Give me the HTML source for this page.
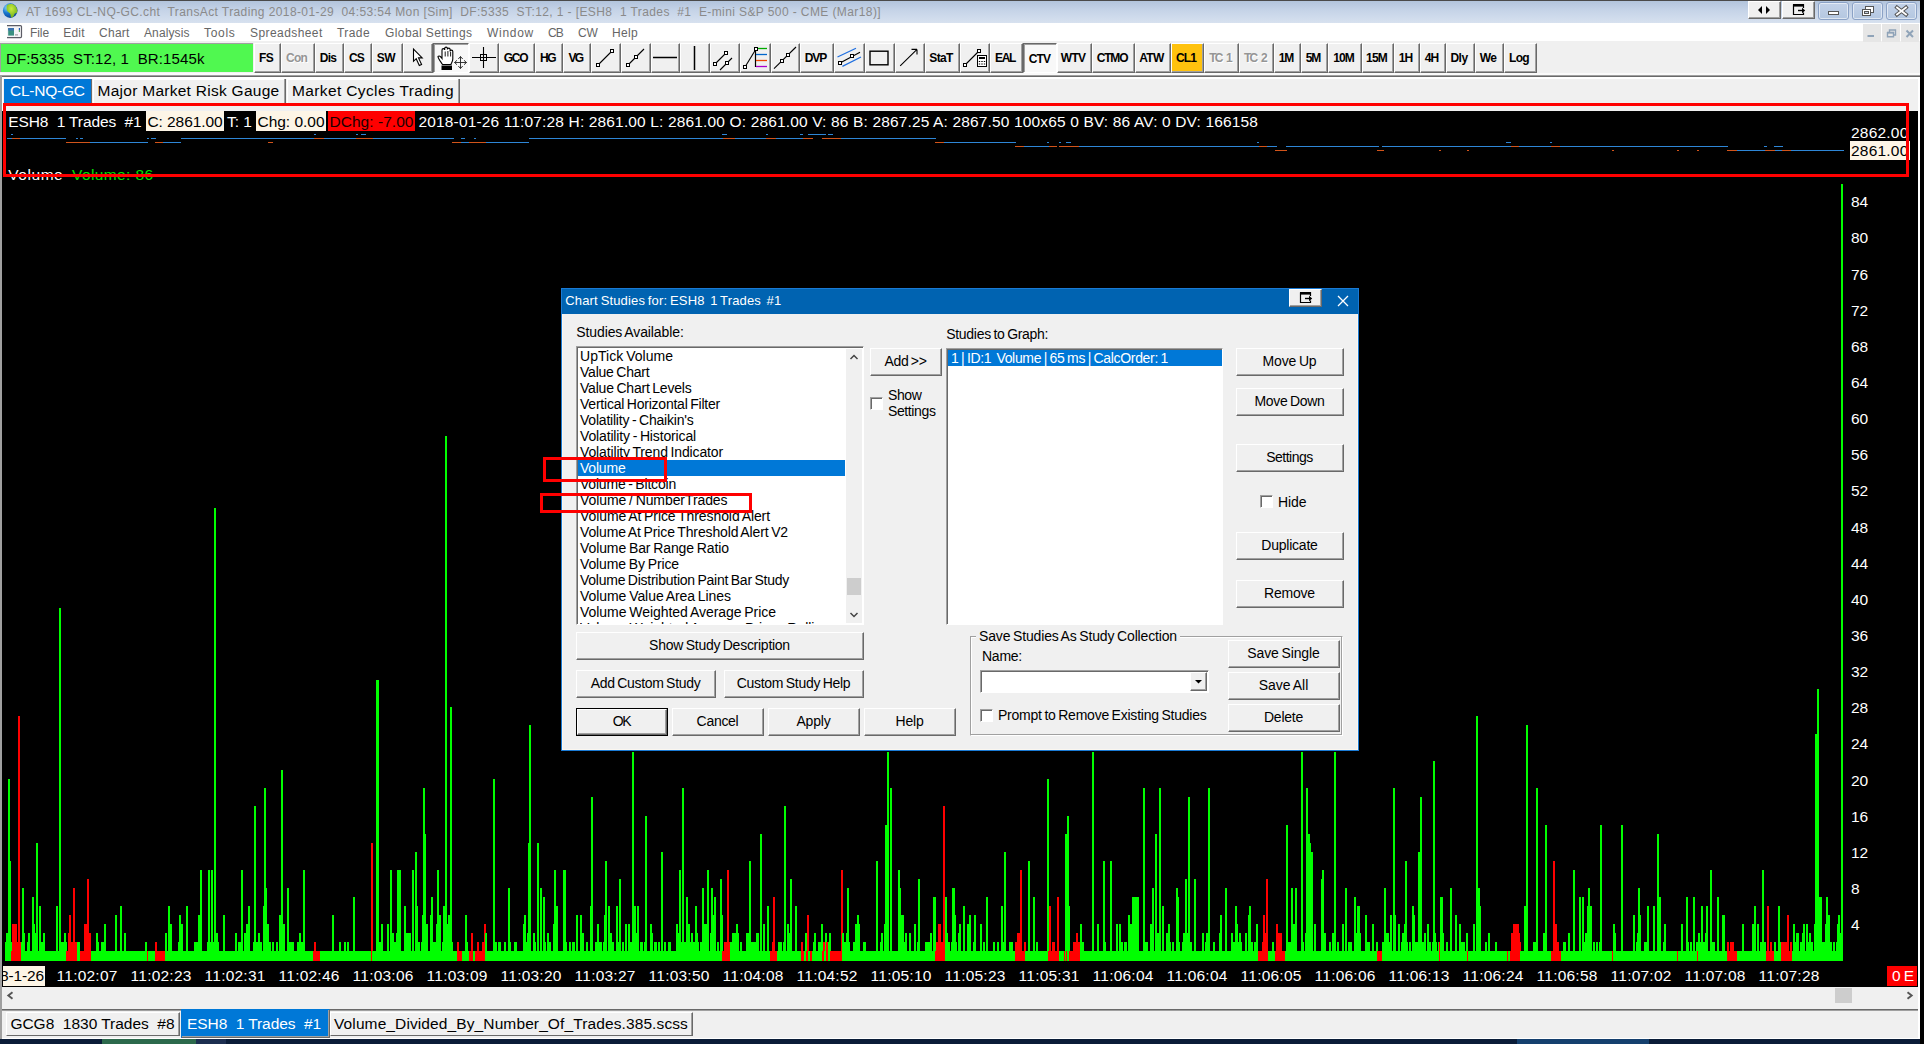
<!DOCTYPE html>
<html lang="en"><head><meta charset="utf-8"><title>Chart Studies</title>
<style>
html,body{margin:0;padding:0}
body{width:1924px;height:1044px;overflow:hidden;background:#000;position:relative;font-family:"Liberation Sans",sans-serif}
div,span,svg{position:absolute}
span{white-space:pre}
span>i{font-style:normal;position:static}
</style></head>
<body>
<div style="left:0px;top:1039px;width:1924px;height:5px;background:#0a1c38"></div>
<div style="left:102px;top:1039px;width:94px;height:5px;background:#2c694c"></div>
<div style="left:196px;top:1039px;width:30px;height:5px;background:#1c2e50"></div>
<div style="left:1517px;top:1039px;width:132px;height:5px;background:#15406e"></div>
<div style="left:1920px;top:0px;width:4px;height:1044px;background:#000"></div>
<div style="left:0px;top:0px;width:1920px;height:1039px;background:#f0f0f0"></div>
<div style="left:0px;top:0px;width:1920px;height:23px;background:linear-gradient(#b2c4dc,#c6d4e8 45%,#d7e1ef);border-top:1px solid #4a4a4a;box-sizing:border-box"></div>
<svg style="left:2px;top:2px" width="18" height="18" viewBox="0 0 18 18"><defs><radialGradient id="gl" cx="30%" cy="30%" r="80%"><stop offset="0" stop-color="#8fd8ff"/><stop offset=".45" stop-color="#1878d0"/><stop offset="1" stop-color="#0a3c90"/></radialGradient><radialGradient id="gg" cx="45%" cy="35%" r="70%"><stop offset="0" stop-color="#c8ec40"/><stop offset="1" stop-color="#6cac18"/></radialGradient></defs><circle cx="8.200" cy="8.600" r="7.300" fill="url(#gl)"/><path d="M5 3.200c2.500-1.800 6.500-1.800 8.500.8 1.600 2.200 2.200 4.500 1.600 6.500-1 .8-2.200.4-2.700 1.800-.5 1.600-1.500 3-3 3.400-1-1-.4-3-1.500-4.400-1.500-1-2.600-1.800-3.100-3.300-.4-1.700-.4-3.400.2-4.800z" fill="url(#gg)"/></svg>
<span id="t1" style="top:3.64px;font-size:12px;line-height:16px;color:#8a8a8a;letter-spacing:0.402px;left:26px;">AT 1693 CL-NQ-GC.cht  TransAct Trading 2018-01-29  04:53:54 Mon [Sim]  DF:5335  ST:12, 1 - [ESH8  1 Trades  #1  E-mini S&amp;P 500 - CME (Mar18)]</span>
<div style="left:1748px;top:1px;width:33px;height:18px;background:#f0f0f0;border:1px solid;border-color:#fff #696969 #696969 #fff;box-shadow:inset -1px -1px 0 #a0a0a0;box-sizing:border-box"><svg width="30" height="16" viewBox="0 0 30 16"><path d="M13 4v8l-4-4zM17 4v8l4-4z" fill="#000"/></svg></div>
<div style="left:1782px;top:1px;width:33px;height:18px;background:#f0f0f0;border:1px solid;border-color:#fff #696969 #696969 #fff;box-shadow:inset -1px -1px 0 #a0a0a0;box-sizing:border-box"><svg width="30" height="16" viewBox="0 0 30 16"><path d="M10.500 2.500h10v3.500M20.500 10.500v2h-10v-10" fill="none" stroke="#000" stroke-width="1.200"/><path d="M10 2h11v2.600h-11z" fill="#000"/><path d="M15 8.500h5" stroke="#000" stroke-width="1.400"/><path d="M19 5.800l3.200 2.700-3.200 2.700z" fill="#000"/></svg></div>
<div style="left:1818px;top:2px;width:31px;height:18px;background:linear-gradient(#c3d2e8,#b4c7e0);border:1px solid #8ba2c6;border-radius:3px;box-shadow:inset 0 0 0 1px rgba(255,255,255,.55);box-sizing:border-box"><svg width="29" height="16" viewBox="0 0 29 16"><rect x="9.5" y="8.500" width="10" height="3" fill="#fff" stroke="#555"/></svg></div>
<div style="left:1852px;top:2px;width:31px;height:18px;background:linear-gradient(#c3d2e8,#b4c7e0);border:1px solid #8ba2c6;border-radius:3px;box-shadow:inset 0 0 0 1px rgba(255,255,255,.55);box-sizing:border-box"><svg width="29" height="16" viewBox="0 0 29 16"><rect x="12.5" y="3.500" width="8" height="6" fill="#fff" stroke="#555"/><rect x="9.500" y="6.500" width="8" height="6" fill="#fff" stroke="#555"/><rect x="11.5" y="8.500" width="4" height="2" fill="#c8d4e6" stroke="#555"/></svg></div>
<div style="left:1886px;top:2px;width:31px;height:18px;background:linear-gradient(#c3d2e8,#b4c7e0);border:1px solid #8ba2c6;border-radius:3px;box-shadow:inset 0 0 0 1px rgba(255,255,255,.55);box-sizing:border-box"><svg width="29" height="16" viewBox="0 0 29 16"><path d="M10 4.500l9 7M19 4.500l-9 7" stroke="#555" stroke-width="3.800" stroke-linecap="square"/><path d="M10 4.500l9 7M19 4.500l-9 7" stroke="#fff" stroke-width="1.800" stroke-linecap="square"/></svg></div>
<div style="left:0px;top:23px;width:1920px;height:18px;background:#fff"></div>
<svg style="left:7px;top:25px" width="16" height="14" viewBox="0 0 16 14"><path d="M0 .600h13.500q1 0 1 1v10q0 1-1 1h-13.500" fill="#f4f4f6" stroke="#5c5c66" stroke-width="1.200"/><rect x="1.200" y="3" width="5.800" height="7.600" fill="#3a9080"/><rect x="1.200" y="3" width="5.800" height="2.500" fill="#3a70b0"/><rect x="11.800" y="3" width="1.200" height="2.200" fill="#2458b0"/><rect x="11.800" y="5.200" width="1.200" height="1.600" fill="#40a040"/><rect x="8" y="9.100" width="3" height="1.500" fill="#b0b0b0"/></svg>
<span id="t2" style="top:25.04px;font-size:12px;line-height:16px;color:#666;letter-spacing:-0.086px;left:30px;">File</span>
<span id="t3" style="top:25.04px;font-size:12px;line-height:16px;color:#666;letter-spacing:0.228px;left:63.2px;">Edit</span>
<span id="t4" style="top:25.04px;font-size:12px;line-height:16px;color:#666;letter-spacing:0.271px;left:99px;">Chart</span>
<span id="t5" style="top:25.04px;font-size:12px;line-height:16px;color:#666;letter-spacing:0.114px;left:144px;">Analysis</span>
<span id="t6" style="top:25.04px;font-size:12px;line-height:16px;color:#666;letter-spacing:0.697px;left:204px;">Tools</span>
<span id="t7" style="top:25.04px;font-size:12px;line-height:16px;color:#666;letter-spacing:0.422px;left:250px;">Spreadsheet</span>
<span id="t8" style="top:25.04px;font-size:12px;line-height:16px;color:#666;letter-spacing:0.419px;left:337px;">Trade</span>
<span id="t9" style="top:25.04px;font-size:12px;line-height:16px;color:#666;letter-spacing:0.401px;left:385px;">Global Settings</span>
<span id="t10" style="top:25.04px;font-size:12px;line-height:16px;color:#666;letter-spacing:0.719px;left:487px;">Window</span>
<span id="t11" style="top:25.04px;font-size:12px;line-height:16px;color:#666;letter-spacing:-0.836px;left:548px;">CB</span>
<span id="t12" style="top:25.04px;font-size:12px;line-height:16px;color:#666;letter-spacing:-0.100px;left:578px;">CW</span>
<span id="t13" style="top:25.04px;font-size:12px;line-height:16px;color:#666;letter-spacing:0.328px;left:612px;">Help</span>
<div style="left:1863px;top:24px;width:18px;height:18px;background:#e6e6e6"></div>
<div style="left:1882px;top:24px;width:18px;height:18px;background:#e6e6e6"></div>
<div style="left:1901px;top:24px;width:18px;height:18px;background:#e6e6e6"></div>
<svg style="left:1863px;top:24px" width="56" height="19" viewBox="0 0 56 19"><path d="M4.500 12h6.500" stroke="#8fa3b8" stroke-width="2"/><path d="M26.500 8v-2h6v5h-2" fill="none" stroke="#8fa3b8" stroke-width="1.400"/><path d="M24.500 8.800h6v4h-6z" fill="none" stroke="#8fa3b8" stroke-width="1.400"/><path d="M24 8.500h7" stroke="#8fa3b8" stroke-width="1.600"/><path d="M43.500 6.500l6.500 6.500M50 6.500l-6.500 6.500" stroke="#8fa3b8" stroke-width="2"/></svg>
<div style="left:0px;top:43px;width:1920px;height:30px;background:#f0f0f0"></div>
<div style="left:0px;top:73px;width:1920px;height:2px;background:#fafafa"></div>
<div style="left:0px;top:75px;width:1920px;height:1px;background:#a0a0a0"></div>
<div style="left:0px;top:76px;width:1920px;height:1px;background:#696969"></div>
<div style="left:0px;top:43px;width:253px;height:29px;background:#a0a0a0"></div>
<div style="left:1px;top:44px;width:252px;height:28px;background:#50f850"></div>
<span id="t14" style="top:48.60px;font-size:15px;line-height:20px;color:#000;letter-spacing:0.129px;left:6px;">DF:5335  ST:12, 1  BR:1545k</span>
<div style="left:254px;top:43px;width:27px;height:30px;background:#f0f0f0;border:1px solid;border-color:#fff #696969 #696969 #fff;box-shadow:inset -1px -1px 0 #a0a0a0;box-sizing:border-box"></div>
<span style="top:49.54px;font-size:12px;line-height:16px;color:#000;font-weight:bold;letter-spacing:-0.672px;left:66.0px;width:400px;text-align:center;"><i id="t15">FS</i></span>
<div style="left:281px;top:43px;width:34px;height:30px;background:#f0f0f0;border:1px solid;border-color:#fff #696969 #696969 #fff;box-shadow:inset -1px -1px 0 #a0a0a0;box-sizing:border-box"></div>
<span style="top:49.54px;font-size:12px;line-height:16px;color:#959595;font-weight:bold;letter-spacing:-0.776px;left:96.5px;width:400px;text-align:center;text-shadow:1px 1px 0 #fff;"><i id="t16">Con</i></span>
<div style="left:315px;top:43px;width:29px;height:30px;background:#f0f0f0;border:1px solid;border-color:#fff #696969 #696969 #fff;box-shadow:inset -1px -1px 0 #a0a0a0;box-sizing:border-box"></div>
<span style="top:49.54px;font-size:12px;line-height:16px;color:#000;font-weight:bold;letter-spacing:-0.696px;left:128.0px;width:400px;text-align:center;"><i id="t17">Dis</i></span>
<div style="left:344px;top:43px;width:28px;height:30px;background:#f0f0f0;border:1px solid;border-color:#fff #696969 #696969 #fff;box-shadow:inset -1px -1px 0 #a0a0a0;box-sizing:border-box"></div>
<span style="top:49.54px;font-size:12px;line-height:16px;color:#000;font-weight:bold;letter-spacing:-0.836px;left:156.5px;width:400px;text-align:center;"><i id="t18">CS</i></span>
<div style="left:372px;top:43px;width:31px;height:30px;background:#f0f0f0;border:1px solid;border-color:#fff #696969 #696969 #fff;box-shadow:inset -1px -1px 0 #a0a0a0;box-sizing:border-box"></div>
<span style="top:49.54px;font-size:12px;line-height:16px;color:#000;font-weight:bold;letter-spacing:-0.522px;left:186.0px;width:400px;text-align:center;"><i id="t19">SW</i></span>
<div style="left:403px;top:43px;width:30px;height:30px;background:#f0f0f0;border:1px solid;border-color:#fff #696969 #696969 #fff;box-shadow:inset -1px -1px 0 #a0a0a0;box-sizing:border-box"><svg style="left:-1px;top:-1px" width="36" height="30" viewBox="0 0 36 30"><path d="M10.500 6v12.300l2.700-2.600 3.100 6.900 2.300-1.100-3.100-6.600h3.700z" fill="#fff" stroke="#000" stroke-width="1.100"/></svg></div>
<div style="left:433px;top:43px;width:36px;height:30px;background:#f8f8f8;border:1px solid;border-color:#696969 #fff #fff #696969;box-shadow:inset 1px 1px 0 #a0a0a0;box-sizing:border-box"><svg style="left:0px;top:0px" width="36" height="30" viewBox="0 0 36 30"><path d="M8.500 20.500c-1.500-2.500-4.500-6-4.500-8 1.200-1.200 2.500 0 4 2v-8.500c0-1.800 2.700-1.800 2.700 0v-1.500c0-1.800 2.700-1.800 2.700 0v1c0-1.800 2.700-1.800 2.700 0v2c0-1.800 2.700-1.800 2.700 0v7.500c0 2.500-1.200 3.500-1.800 5.500z" fill="#fff" stroke="#000" stroke-width="1.100"/><path d="M11.200 7.500v5M13.900 7v5.500M16.600 8v4.500" stroke="#000" stroke-width=".9"/><rect x="7.500" y="21.500" width="10.500" height="4.500" fill="#000"/><path transform="translate(1,-1.500)" d="M25.500 14v12M19.500 20h12M25.500 14l-2.200 2.500M25.500 14l2.200 2.500M25.500 26l-2.200-2.500M25.500 26l2.200-2.500M19.500 20l2.500-2.200M19.500 20l2.500 2.200M31.500 20l-2.500-2.200M31.500 20l-2.500 2.200" stroke="#222" stroke-width=".9" fill="none"/></svg></div>
<div style="left:469px;top:43px;width:30px;height:30px;background:#f0f0f0;border:1px solid;border-color:#fff #696969 #696969 #fff;box-shadow:inset -1px -1px 0 #a0a0a0;box-sizing:border-box"><svg style="left:-1px;top:-1px" width="36" height="30" viewBox="0 0 36 30"><path d="M3 14.500h24M14.500 4v21" stroke="#000" stroke-width="1.100"/><rect x="11.500" y="11.500" width="6" height="6" fill="none" stroke="#000"/></svg></div>
<div style="left:499px;top:43px;width:36px;height:30px;background:#f0f0f0;border:1px solid;border-color:#fff #696969 #696969 #fff;box-shadow:inset -1px -1px 0 #a0a0a0;box-sizing:border-box"></div>
<span style="top:49.54px;font-size:12px;line-height:16px;color:#000;font-weight:bold;letter-spacing:-1.348px;left:315.5px;width:400px;text-align:center;"><i id="t20">GCO</i></span>
<div style="left:535px;top:43px;width:28px;height:30px;background:#f0f0f0;border:1px solid;border-color:#fff #696969 #696969 #fff;box-shadow:inset -1px -1px 0 #a0a0a0;box-sizing:border-box"></div>
<span style="top:49.54px;font-size:12px;line-height:16px;color:#000;font-weight:bold;letter-spacing:-1.500px;left:347.5px;width:400px;text-align:center;"><i id="t21">HG</i></span>
<div style="left:563px;top:43px;width:28px;height:30px;background:#f0f0f0;border:1px solid;border-color:#fff #696969 #696969 #fff;box-shadow:inset -1px -1px 0 #a0a0a0;box-sizing:border-box"></div>
<span style="top:49.54px;font-size:12px;line-height:16px;color:#000;font-weight:bold;letter-spacing:-1.672px;left:375.5px;width:400px;text-align:center;"><i id="t22">VG</i></span>
<div style="left:591px;top:43px;width:30px;height:30px;background:#f0f0f0;border:1px solid;border-color:#fff #696969 #696969 #fff;box-shadow:inset -1px -1px 0 #a0a0a0;box-sizing:border-box"><svg style="left:-1px;top:-1px" width="36" height="30" viewBox="0 0 36 30"><path d="M7 22L21 8" stroke="#000" stroke-width="1.100"/><rect x="5.5" y="20.5" width="3" height="3" fill="#fff" stroke="#000" stroke-width="1"/><rect x="19.5" y="6.5" width="3" height="3" fill="#fff" stroke="#000" stroke-width="1"/></svg></div>
<div style="left:621px;top:43px;width:30px;height:30px;background:#f0f0f0;border:1px solid;border-color:#fff #696969 #696969 #fff;box-shadow:inset -1px -1px 0 #a0a0a0;box-sizing:border-box"><svg style="left:-1px;top:-1px" width="36" height="30" viewBox="0 0 36 30"><path d="M7 22L23 6" stroke="#000" stroke-width="1.100"/><rect x="5.5" y="20.5" width="3" height="3" fill="#fff" stroke="#000" stroke-width="1"/><rect x="13.5" y="12.5" width="3" height="3" fill="#fff" stroke="#000" stroke-width="1"/></svg></div>
<div style="left:651px;top:43px;width:29px;height:30px;background:#f0f0f0;border:1px solid;border-color:#fff #696969 #696969 #fff;box-shadow:inset -1px -1px 0 #a0a0a0;box-sizing:border-box"><svg style="left:-1px;top:-1px" width="36" height="30" viewBox="0 0 36 30"><path d="M2 14.500h24" stroke="#000" stroke-width="1.500"/></svg></div>
<div style="left:680px;top:43px;width:30px;height:30px;background:#f0f0f0;border:1px solid;border-color:#fff #696969 #696969 #fff;box-shadow:inset -1px -1px 0 #a0a0a0;box-sizing:border-box"><svg style="left:-1px;top:-1px" width="36" height="30" viewBox="0 0 36 30"><path d="M14.500 3v24" stroke="#000" stroke-width="1.500"/></svg></div>
<div style="left:710px;top:43px;width:30px;height:30px;background:#f0f0f0;border:1px solid;border-color:#fff #696969 #696969 #fff;box-shadow:inset -1px -1px 0 #a0a0a0;box-sizing:border-box"><svg style="left:-1px;top:-1px" width="36" height="30" viewBox="0 0 36 30"><path d="M5 21L16 10M10 27L22 15" stroke="#000" stroke-width="1.100"/><rect x="3.5" y="19.5" width="3" height="3" fill="#fff" stroke="#000" stroke-width="1"/><rect x="14.5" y="8.5" width="3" height="3" fill="#fff" stroke="#000" stroke-width="1"/><rect x="15.5" y="18.5" width="3" height="3" fill="#fff" stroke="#000" stroke-width="1"/></svg></div>
<div style="left:740px;top:43px;width:31px;height:30px;background:#f0f0f0;border:1px solid;border-color:#fff #696969 #696969 #fff;box-shadow:inset -1px -1px 0 #a0a0a0;box-sizing:border-box"><svg style="left:-1px;top:-1px" width="36" height="30" viewBox="0 0 36 30"><path d="M5 24L16 6" stroke="#000" stroke-width="1.100"/><path d="M15.500 6v18" stroke="#000" stroke-width="1.200"/><path d="M16 5.500h11" stroke="#0a0" stroke-width="1.300"/><path d="M16 11.500h11" stroke="#06c" stroke-width="1.300"/><path d="M16 17.500h11" stroke="#e40" stroke-width="1.300"/><path d="M16 23.500h11" stroke="#a0c" stroke-width="1.300"/><rect x="3.5" y="22.5" width="3" height="3" fill="#fff" stroke="#000" stroke-width="1"/><rect x="14.5" y="4.5" width="3" height="3" fill="#fff" stroke="#000" stroke-width="1"/></svg></div>
<div style="left:771px;top:43px;width:29px;height:30px;background:#f0f0f0;border:1px solid;border-color:#fff #696969 #696969 #fff;box-shadow:inset -1px -1px 0 #a0a0a0;box-sizing:border-box"><svg style="left:-1px;top:-1px" width="36" height="30" viewBox="0 0 36 30"><path d="M3 25.700L25 4" stroke="#000" stroke-width="1.100"/><rect x="9.5" y="16.5" width="3" height="3" fill="#fff" stroke="#000" stroke-width="1"/><rect x="15.5" y="10.5" width="3" height="3" fill="#fff" stroke="#000" stroke-width="1"/></svg></div>
<div style="left:800px;top:43px;width:34px;height:30px;background:#f0f0f0;border:1px solid;border-color:#fff #696969 #696969 #fff;box-shadow:inset -1px -1px 0 #a0a0a0;box-sizing:border-box"></div>
<span style="top:49.54px;font-size:12px;line-height:16px;color:#000;font-weight:bold;letter-spacing:-1.029px;left:615.5px;width:400px;text-align:center;"><i id="t23">DVP</i></span>
<div style="left:834px;top:43px;width:31px;height:30px;background:#f0f0f0;border:1px solid;border-color:#fff #696969 #696969 #fff;box-shadow:inset -1px -1px 0 #a0a0a0;box-sizing:border-box"><svg style="left:-1px;top:-1px" width="36" height="30" viewBox="0 0 36 30"><path d="M3.500 14L22 5.300M8.400 23.400L27 14" stroke="#1f6fe0" stroke-width="1.250"/><path d="M6 20L26 9.300" stroke="#000" stroke-width="1.100"/><rect x="4.5" y="18.5" width="3" height="3" fill="#fff" stroke="#000" stroke-width="1"/><rect x="16.5" y="11.5" width="3" height="3" fill="#fff" stroke="#000" stroke-width="1"/></svg></div>
<div style="left:865px;top:43px;width:30px;height:30px;background:#f0f0f0;border:1px solid;border-color:#fff #696969 #696969 #fff;box-shadow:inset -1px -1px 0 #a0a0a0;box-sizing:border-box"><svg style="left:-1px;top:-1px" width="36" height="30" viewBox="0 0 36 30"><rect x="5" y="8.200" width="18" height="13.600" fill="none" stroke="#000" stroke-width="1.400"/></svg></div>
<div style="left:895px;top:43px;width:30px;height:30px;background:#f0f0f0;border:1px solid;border-color:#fff #696969 #696969 #fff;box-shadow:inset -1px -1px 0 #a0a0a0;box-sizing:border-box"><svg style="left:-1px;top:-1px" width="36" height="30" viewBox="0 0 36 30"><path d="M5.200 22.800L22 6.400M22 6.400h-5.500M22 6.400v5" stroke="#000" stroke-width="1.100" fill="none"/></svg></div>
<div style="left:925px;top:43px;width:35px;height:30px;background:#f0f0f0;border:1px solid;border-color:#fff #696969 #696969 #fff;box-shadow:inset -1px -1px 0 #a0a0a0;box-sizing:border-box"></div>
<span style="top:49.54px;font-size:12px;line-height:16px;color:#000;font-weight:bold;letter-spacing:-0.679px;left:741.0px;width:400px;text-align:center;"><i id="t24">StaT</i></span>
<div style="left:960px;top:43px;width:30px;height:30px;background:#f0f0f0;border:1px solid;border-color:#fff #696969 #696969 #fff;box-shadow:inset -1px -1px 0 #a0a0a0;box-sizing:border-box"><svg style="left:-1px;top:-1px" width="36" height="30" viewBox="0 0 36 30"><path d="M5 22L19 8" stroke="#000" stroke-width="1.100"/><rect x="3.5" y="20.5" width="3" height="3" fill="#fff" stroke="#000" stroke-width="1"/><rect x="17.5" y="6.5" width="3" height="3" fill="#fff" stroke="#000" stroke-width="1"/><rect x="17.500" y="12.500" width="9" height="11" fill="#fff" stroke="#000"/><rect x="19" y="14" width="6" height="2" fill="#000"/><path d="M19.500 18v1M22 18v1M24.500 18v1M19.500 20.500v1M22 20.500v1M24.500 20.500v1" stroke="#000" stroke-width="1.400"/></svg></div>
<div style="left:990px;top:43px;width:33px;height:30px;background:#f0f0f0;border:1px solid;border-color:#fff #696969 #696969 #fff;box-shadow:inset -1px -1px 0 #a0a0a0;box-sizing:border-box"></div>
<span style="top:49.54px;font-size:12px;line-height:16px;color:#000;font-weight:bold;letter-spacing:-1.333px;left:805.0px;width:400px;text-align:center;"><i id="t25">EAL</i></span>
<div style="left:1023px;top:43px;width:34px;height:30px;background:#f8f8f8;border:1px solid;border-color:#696969 #fff #fff #696969;box-shadow:inset 1px 1px 0 #a0a0a0;box-sizing:border-box"></div>
<span style="top:50.54px;font-size:12px;line-height:16px;color:#000;font-weight:bold;letter-spacing:-0.900px;left:839.5px;width:400px;text-align:center;"><i id="t26">CTV</i></span>
<div style="left:1057px;top:43px;width:35px;height:30px;background:#f0f0f0;border:1px solid;border-color:#fff #696969 #696969 #fff;box-shadow:inset -1px -1px 0 #a0a0a0;box-sizing:border-box"></div>
<span style="top:49.54px;font-size:12px;line-height:16px;color:#000;font-weight:bold;letter-spacing:-0.791px;left:873.0px;width:400px;text-align:center;"><i id="t27">WTV</i></span>
<div style="left:1092px;top:43px;width:43px;height:30px;background:#f0f0f0;border:1px solid;border-color:#fff #696969 #696969 #fff;box-shadow:inset -1px -1px 0 #a0a0a0;box-sizing:border-box"></div>
<span style="top:49.54px;font-size:12px;line-height:16px;color:#000;font-weight:bold;letter-spacing:-1.182px;left:912.0px;width:400px;text-align:center;"><i id="t28">CTMO</i></span>
<div style="left:1135px;top:43px;width:36px;height:30px;background:#f0f0f0;border:1px solid;border-color:#fff #696969 #696969 #fff;box-shadow:inset -1px -1px 0 #a0a0a0;box-sizing:border-box"></div>
<span style="top:49.54px;font-size:12px;line-height:16px;color:#000;font-weight:bold;letter-spacing:-0.612px;left:951.5px;width:400px;text-align:center;"><i id="t29">ATW</i></span>
<div style="left:1171px;top:43px;width:33px;height:30px;background:#ffc20e;border:1px solid;border-color:#fff #696969 #696969 #fff;box-shadow:inset -1px -1px 0 #a0a0a0;box-sizing:border-box"></div>
<span style="top:49.54px;font-size:12px;line-height:16px;color:#000;font-weight:bold;letter-spacing:-0.891px;left:986.0px;width:400px;text-align:center;"><i id="t30">CL1</i></span>
<div style="left:1204px;top:43px;width:35px;height:30px;background:#f0f0f0;border:1px solid;border-color:#fff #696969 #696969 #fff;box-shadow:inset -1px -1px 0 #a0a0a0;box-sizing:border-box"></div>
<span style="top:49.54px;font-size:12px;line-height:16px;color:#959595;font-weight:bold;letter-spacing:-1.879px;left:1020.0px;width:400px;text-align:center;text-shadow:1px 1px 0 #fff;word-spacing:3px;"><i id="t31">TC 1</i></span>
<div style="left:1239px;top:43px;width:35px;height:30px;background:#f0f0f0;border:1px solid;border-color:#fff #696969 #696969 #fff;box-shadow:inset -1px -1px 0 #a0a0a0;box-sizing:border-box"></div>
<span style="top:49.54px;font-size:12px;line-height:16px;color:#959595;font-weight:bold;letter-spacing:-1.754px;left:1055.0px;width:400px;text-align:center;text-shadow:1px 1px 0 #fff;word-spacing:3px;"><i id="t32">TC 2</i></span>
<div style="left:1274px;top:43px;width:27px;height:30px;background:#f0f0f0;border:1px solid;border-color:#fff #696969 #696969 #fff;box-shadow:inset -1px -1px 0 #a0a0a0;box-sizing:border-box"></div>
<span style="top:49.54px;font-size:12px;line-height:16px;color:#000;font-weight:bold;letter-spacing:-1.086px;left:1086.0px;width:400px;text-align:center;"><i id="t33">1M</i></span>
<div style="left:1301px;top:43px;width:27px;height:30px;background:#f0f0f0;border:1px solid;border-color:#fff #696969 #696969 #fff;box-shadow:inset -1px -1px 0 #a0a0a0;box-sizing:border-box"></div>
<span style="top:49.54px;font-size:12px;line-height:16px;color:#000;font-weight:bold;letter-spacing:-0.986px;left:1113.0px;width:400px;text-align:center;"><i id="t34">5M</i></span>
<div style="left:1328px;top:43px;width:34px;height:30px;background:#f0f0f0;border:1px solid;border-color:#fff #696969 #696969 #fff;box-shadow:inset -1px -1px 0 #a0a0a0;box-sizing:border-box"></div>
<span style="top:49.54px;font-size:12px;line-height:16px;color:#000;font-weight:bold;letter-spacing:-0.881px;left:1143.5px;width:400px;text-align:center;"><i id="t35">10M</i></span>
<div style="left:1362px;top:43px;width:32px;height:30px;background:#f0f0f0;border:1px solid;border-color:#fff #696969 #696969 #fff;box-shadow:inset -1px -1px 0 #a0a0a0;box-sizing:border-box"></div>
<span style="top:49.54px;font-size:12px;line-height:16px;color:#000;font-weight:bold;letter-spacing:-0.781px;left:1176.5px;width:400px;text-align:center;"><i id="t36">15M</i></span>
<div style="left:1394px;top:43px;width:26px;height:30px;background:#f0f0f0;border:1px solid;border-color:#fff #696969 #696969 #fff;box-shadow:inset -1px -1px 0 #a0a0a0;box-sizing:border-box"></div>
<span style="top:49.54px;font-size:12px;line-height:16px;color:#000;font-weight:bold;letter-spacing:-0.972px;left:1205.5px;width:400px;text-align:center;"><i id="t37">1H</i></span>
<div style="left:1420px;top:43px;width:26px;height:30px;background:#f0f0f0;border:1px solid;border-color:#fff #696969 #696969 #fff;box-shadow:inset -1px -1px 0 #a0a0a0;box-sizing:border-box"></div>
<span style="top:49.54px;font-size:12px;line-height:16px;color:#000;font-weight:bold;letter-spacing:-0.822px;left:1231.5px;width:400px;text-align:center;"><i id="t38">4H</i></span>
<div style="left:1446px;top:43px;width:29px;height:30px;background:#f0f0f0;border:1px solid;border-color:#fff #696969 #696969 #fff;box-shadow:inset -1px -1px 0 #a0a0a0;box-sizing:border-box"></div>
<span style="top:49.54px;font-size:12px;line-height:16px;color:#000;font-weight:bold;letter-spacing:-0.562px;left:1259.0px;width:400px;text-align:center;"><i id="t39">Dly</i></span>
<div style="left:1475px;top:43px;width:29px;height:30px;background:#f0f0f0;border:1px solid;border-color:#fff #696969 #696969 #fff;box-shadow:inset -1px -1px 0 #a0a0a0;box-sizing:border-box"></div>
<span style="top:49.54px;font-size:12px;line-height:16px;color:#000;font-weight:bold;letter-spacing:-0.548px;left:1288.0px;width:400px;text-align:center;"><i id="t40">We</i></span>
<div style="left:1504px;top:43px;width:33px;height:30px;background:#f0f0f0;border:1px solid;border-color:#fff #696969 #696969 #fff;box-shadow:inset -1px -1px 0 #a0a0a0;box-sizing:border-box"></div>
<span style="top:49.54px;font-size:12px;line-height:16px;color:#000;font-weight:bold;letter-spacing:-0.667px;left:1319.0px;width:400px;text-align:center;"><i id="t41">Log</i></span>
<div style="left:2px;top:77px;width:1917px;height:2px;background:#fff"></div>
<div style="left:2px;top:77px;width:1px;height:34px;background:#fff"></div>
<div style="left:4px;top:79px;width:87px;height:24px;background:#0078d7"></div>
<div style="left:91px;top:79px;width:1px;height:24px;background:#696969"></div>
<span id="t42" style="top:80.73px;font-size:15.5px;line-height:20px;color:#fff;letter-spacing:-0.230px;left:10px;">CL-NQ-GC</span>
<div style="left:93px;top:79px;width:192px;height:1px;background:#fff"></div>
<div style="left:93px;top:79px;width:1px;height:24px;background:#fff"></div>
<div style="left:287px;top:79px;width:172px;height:1px;background:#fff"></div>
<div style="left:287px;top:79px;width:1px;height:24px;background:#fff"></div>
<div style="left:284px;top:79px;width:1px;height:24px;background:#a0a0a0"></div>
<div style="left:285px;top:79px;width:1px;height:24px;background:#696969"></div>
<span id="t43" style="top:80.73px;font-size:15.5px;line-height:20px;color:#000;letter-spacing:0.272px;left:97.5px;">Major Market Risk Gauge</span>
<div style="left:458px;top:79px;width:1px;height:24px;background:#a0a0a0"></div>
<div style="left:459px;top:79px;width:1px;height:24px;background:#696969"></div>
<span id="t44" style="top:80.73px;font-size:15.5px;line-height:20px;color:#000;letter-spacing:0.371px;left:292px;">Market Cycles Trading</span>
<div style="left:2px;top:111px;width:1916px;height:876px;background:#000"></div>
<div style="left:1918px;top:77px;width:2px;height:962px;background:#fff"></div>
<div style="left:0px;top:75px;width:2px;height:964px;background:#a0a0a0"></div>
<div style="left:2px;top:987px;width:1916px;height:22px;background:#f0f0f0"></div>
<span id="t45" style="top:111.63px;font-size:15.5px;line-height:20px;color:#fff;letter-spacing:-0.121px;left:8.3px;">ESH8  1 Trades  #1</span>
<div style="left:146px;top:111px;width:78px;height:20px;background:#fdf5e6"></div>
<span id="t46" style="top:111.63px;font-size:15.5px;line-height:20px;color:#000;letter-spacing:-0.084px;left:147.5px;">C: 2861.00</span>
<span id="t47" style="top:111.63px;font-size:15.5px;line-height:20px;color:#fff;letter-spacing:0.004px;left:227px;">T: 1</span>
<div style="left:256px;top:111px;width:70px;height:20px;background:#fdf5e6"></div>
<span id="t48" style="top:111.63px;font-size:15.5px;line-height:20px;color:#000;letter-spacing:-0.024px;left:257.5px;">Chg: 0.00</span>
<div style="left:328px;top:111px;width:87px;height:20px;background:#ff0000"></div>
<span id="t49" style="top:111.63px;font-size:15.5px;line-height:20px;color:#1a0000;letter-spacing:0.038px;left:329.5px;">DChg: -7.00</span>
<span id="t50" style="top:111.63px;font-size:15.5px;line-height:20px;color:#fff;letter-spacing:0.149px;left:418.5px;">2018-01-26 11:07:28 H: 2861.00 L: 2861.00 O: 2861.00 V: 86 B: 2867.25 A: 2867.50 100x65 0 BV: 86 AV: 0 DV: 166158</span>
<span id="t51" style="top:164.63px;font-size:15.5px;line-height:20px;color:#fff;letter-spacing:0.549px;left:8.3px;">Volume</span>
<span id="t52" style="top:164.63px;font-size:15.5px;line-height:20px;color:#00e000;letter-spacing:0.394px;left:72px;">Volume: 86</span>
<svg style="left:0;top:0" width="1924" height="1044" viewBox="0 0 1924 1044" shape-rendering="crispEdges"><path d="M7 138.5H66" stroke="#2e86d6"/><path d="M12 138.5H20" stroke="#d2541a"/><path d="M11 134.5H13" stroke="#2e86d6"/><path d="M66 142.5H90" stroke="#d2541a"/><path d="M90 142.5H148" stroke="#2e86d6"/><path d="M76 138.5H78" stroke="#2e86d6"/><path d="M80 138.5H83" stroke="#2e86d6"/><path d="M147 138.5H149" stroke="#2e86d6"/><path d="M151 138.5H156" stroke="#2e86d6"/><path d="M155 142.5H163" stroke="#d2541a"/><path d="M163 142.5H181" stroke="#2e86d6"/><path d="M181 138.5H454" stroke="#2e86d6"/><path d="M268 142.5H273" stroke="#d2541a"/><path d="M314 138.5H324" stroke="#d2541a"/><path d="M314 134.5H316" stroke="#2e86d6"/><path d="M356 138.5H373" stroke="#d2541a"/><path d="M356 134.5H358" stroke="#2e86d6"/><path d="M361 134.5H366" stroke="#2e86d6"/><path d="M452 142.5H461" stroke="#d2541a"/><path d="M461 142.5H471" stroke="#2e86d6"/><path d="M461 138.5H465" stroke="#2e86d6"/><path d="M469 142.5H486" stroke="#d2541a"/><path d="M474 138.5H476" stroke="#2e86d6"/><path d="M486 142.5H529" stroke="#2e86d6"/><path d="M529 138.5H723" stroke="#2e86d6"/><path d="M723 138.5H735" stroke="#d2541a"/><path d="M735 138.5H766" stroke="#2e86d6"/><path d="M766 138.5H776" stroke="#d2541a"/><path d="M776 138.5H803" stroke="#2e86d6"/><path d="M803 138.5H813" stroke="#d2541a"/><path d="M822 138.5H841" stroke="#d2541a"/><path d="M841 138.5H936" stroke="#2e86d6"/><path d="M722 134.5H727" stroke="#2e86d6"/><path d="M766 134.5H768" stroke="#2e86d6"/><path d="M800 134.5H803" stroke="#2e86d6"/><path d="M808 134.5H826" stroke="#2e86d6"/><path d="M828 134.5H833" stroke="#2e86d6"/><path d="M935 142.5H944" stroke="#d2541a"/><path d="M944 142.5H1016" stroke="#2e86d6"/><path d="M1015 146.5H1024" stroke="#d2541a"/><path d="M1024 146.5H1049" stroke="#2e86d6"/><path d="M1049 146.5H1057" stroke="#d2541a"/><path d="M1059 146.5H1079" stroke="#d2541a"/><path d="M1079 146.5H1259" stroke="#2e86d6"/><path d="M1259 146.5H1267" stroke="#d2541a"/><path d="M1267 146.5H1277" stroke="#2e86d6"/><path d="M1047 142.5H1049" stroke="#2e86d6"/><path d="M1059 142.5H1061" stroke="#2e86d6"/><path d="M1066 142.5H1071" stroke="#2e86d6"/><path d="M1257 142.5H1259" stroke="#2e86d6"/><path d="M1275 150.5H1287" stroke="#d2541a"/><path d="M1286 146.5H1379" stroke="#2e86d6"/><path d="M1377 150.5H1384" stroke="#d2541a"/><path d="M1382 146.5H1728" stroke="#2e86d6"/><path d="M1439 150.5H1441" stroke="#d2541a"/><path d="M1467 150.5H1469" stroke="#d2541a"/><path d="M1612 150.5H1614" stroke="#d2541a"/><path d="M1677 150.5H1679" stroke="#d2541a"/><path d="M1697 150.5H1699" stroke="#d2541a"/><path d="M1511 146.5H1519" stroke="#d2541a"/><path d="M1551 146.5H1560" stroke="#d2541a"/><path d="M1506 142.5H1511" stroke="#2e86d6"/><path d="M1550 142.5H1552" stroke="#2e86d6"/><path d="M1727 150.5H1737" stroke="#d2541a"/><path d="M1737 150.5H1765" stroke="#2e86d6"/><path d="M1765 150.5H1775" stroke="#d2541a"/><path d="M1775 150.5H1782" stroke="#2e86d6"/><path d="M1782 150.5H1791" stroke="#d2541a"/><path d="M1791 150.5H1844" stroke="#2e86d6"/><path d="M1764 146.5H1767" stroke="#2e86d6"/><path d="M1774 146.5H1783" stroke="#2e86d6"/><path d="M5 951h1v10h-1zM5 942h1v9h-1zM6 933h1v28h-1zM7 933h1v9h-1zM7 942h1v19h-1zM8 779h1v182h-1zM9 861h1v100h-1zM9 779h1v82h-1zM10 861h1v81h-1zM10 942h1v19h-1zM11 942h1v9h-1zM21 942h1v19h-1zM22 888h1v73h-1zM23 888h1v45h-1zM23 933h1v28h-1zM24 933h1v18h-1zM24 951h3v10h-3zM27 942h1v19h-1zM28 933h1v28h-1zM29 933h1v18h-1zM29 951h3v10h-3zM32 897h1v64h-1zM33 897h1v27h-1zM33 924h1v37h-1zM34 951h1v10h-1zM34 924h1v27h-1zM35 933h1v28h-1zM36 843h1v118h-1zM37 843h1v108h-1zM37 951h2v10h-2zM39 906h1v55h-1zM40 942h1v19h-1zM40 906h1v36h-1zM41 951h1v10h-1zM41 942h1v9h-1zM42 942h1v19h-1zM43 933h1v28h-1zM44 933h1v18h-1zM44 951h12v10h-12zM56 906h1v55h-1zM57 906h1v45h-1zM57 951h2v10h-2zM59 608h1v353h-1zM60 942h1v19h-1zM60 608h1v334h-1zM61 951h1v10h-1zM61 942h1v9h-1zM62 942h2v19h-2zM64 933h1v28h-1zM65 933h1v9h-1zM65 942h1v19h-1zM66 942h1v9h-1zM77 942h2v19h-2zM79 951h1v10h-1zM79 942h1v9h-1zM91 951h5v10h-5zM96 933h1v28h-1zM97 933h1v9h-1zM97 942h1v19h-1zM98 942h1v9h-1zM98 951h3v10h-3zM101 942h1v19h-1zM102 951h1v10h-1zM102 942h1v9h-1zM103 942h1v19h-1zM104 924h1v37h-1zM105 924h1v27h-1zM105 951h10v10h-10zM115 915h1v46h-1zM116 915h1v36h-1zM116 951h4v10h-4zM120 906h1v55h-1zM121 906h1v45h-1zM121 951h3v10h-3zM124 933h1v28h-1zM125 933h1v18h-1zM125 951h20v10h-20zM145 942h1v19h-1zM146 951h1v10h-1zM146 942h1v9h-1zM148 951h7v10h-7zM165 933h1v28h-1zM166 933h1v18h-1zM166 951h2v10h-2zM168 906h1v55h-1zM169 951h1v10h-1zM169 906h1v45h-1zM170 924h1v37h-1zM171 924h1v27h-1zM171 951h7v10h-7zM178 942h1v19h-1zM179 915h1v46h-1zM180 915h1v36h-1zM180 951h1v10h-1zM181 924h1v37h-1zM182 924h1v27h-1zM182 951h4v10h-4zM186 906h1v55h-1zM187 906h1v45h-1zM187 951h7v10h-7zM194 942h2v19h-2zM196 951h1v10h-1zM196 942h1v9h-1zM197 942h1v19h-1zM198 915h1v46h-1zM199 942h1v19h-1zM199 915h1v27h-1zM200 870h1v91h-1zM201 870h1v81h-1zM201 951h6v10h-6zM207 942h1v19h-1zM208 870h1v91h-1zM209 951h1v10h-1zM209 870h1v81h-1zM210 942h1v19h-1zM211 870h1v91h-1zM212 951h1v10h-1zM212 870h1v81h-1zM213 942h1v19h-1zM214 508h1v453h-1zM215 951h1v10h-1zM215 508h1v443h-1zM216 933h1v28h-1zM217 933h1v9h-1zM217 942h1v19h-1zM218 942h1v9h-1zM218 951h5v10h-5zM223 915h1v46h-1zM224 915h1v36h-1zM224 951h11v10h-11zM235 933h1v28h-1zM236 933h1v18h-1zM236 951h2v10h-2zM238 942h1v19h-1zM239 951h1v10h-1zM239 942h1v9h-1zM240 942h1v19h-1zM241 870h1v91h-1zM242 870h1v81h-1zM242 951h2v10h-2zM244 933h1v28h-1zM245 951h1v10h-1zM245 933h1v18h-1zM246 924h1v37h-1zM247 951h1v10h-1zM247 924h1v27h-1zM248 906h1v55h-1zM249 906h1v45h-1zM249 951h4v10h-4zM253 942h1v19h-1zM254 806h1v155h-1zM255 951h1v10h-1zM255 806h1v145h-1zM256 942h1v19h-1zM257 951h1v10h-1zM257 942h1v9h-1zM258 933h1v28h-1zM259 951h1v10h-1zM259 933h1v18h-1zM260 942h1v19h-1zM261 942h1v9h-1zM261 951h2v10h-2zM263 906h1v55h-1zM264 788h1v173h-1zM265 788h1v100h-1zM265 888h1v73h-1zM266 888h1v54h-1zM266 942h1v19h-1zM267 924h1v37h-1zM268 951h1v10h-1zM268 924h1v27h-1zM269 942h1v19h-1zM270 942h1v9h-1zM270 951h2v10h-2zM272 942h1v19h-1zM273 942h1v9h-1zM273 951h3v10h-3zM276 942h1v19h-1zM277 942h1v9h-1zM277 951h2v10h-2zM279 915h1v46h-1zM280 915h1v36h-1zM280 951h1v10h-1zM281 770h1v191h-1zM282 770h1v154h-1zM282 924h2v37h-2zM284 924h1v27h-1zM284 951h3v10h-3zM287 888h1v73h-1zM288 888h1v54h-1zM288 942h1v19h-1zM289 951h1v10h-1zM289 942h1v9h-1zM290 942h3v19h-3zM293 942h1v9h-1zM293 951h4v10h-4zM297 942h2v19h-2zM299 933h1v28h-1zM300 951h1v10h-1zM300 933h1v18h-1zM301 942h1v19h-1zM302 951h1v10h-1zM302 942h1v9h-1zM303 870h1v91h-1zM304 870h1v81h-1zM304 951h9v10h-9zM320 951h12v10h-12zM332 915h1v46h-1zM333 915h1v36h-1zM333 951h6v10h-6zM339 942h1v19h-1zM340 942h1v9h-1zM340 951h4v10h-4zM344 942h1v19h-1zM345 942h1v9h-1zM345 951h2v10h-2zM347 942h1v19h-1zM348 942h1v9h-1zM348 951h5v10h-5zM353 897h1v64h-1zM354 897h1v54h-1zM354 951h17v10h-17zM372 951h4v10h-4zM376 680h2v281h-2zM378 951h1v10h-1zM378 680h1v271h-1zM379 942h1v19h-1zM380 951h1v10h-1zM380 942h1v9h-1zM381 924h1v37h-1zM382 924h1v27h-1zM382 951h5v10h-5zM387 924h1v37h-1zM388 924h1v27h-1zM388 951h2v10h-2zM390 870h1v91h-1zM391 951h1v10h-1zM391 870h1v81h-1zM392 933h1v28h-1zM393 951h1v10h-1zM393 933h1v18h-1zM394 942h1v19h-1zM395 951h1v10h-1zM395 942h1v9h-1zM396 933h1v28h-1zM397 870h1v91h-1zM398 951h1v10h-1zM398 870h1v81h-1zM399 870h1v91h-1zM400 870h1v81h-1zM400 951h4v10h-4zM404 906h1v55h-1zM405 942h1v19h-1zM405 906h1v36h-1zM406 933h2v28h-2zM408 933h1v9h-1zM408 942h1v19h-1zM409 933h1v28h-1zM410 933h1v18h-1zM410 951h2v10h-2zM412 870h1v91h-1zM413 870h1v81h-1zM413 951h2v10h-2zM415 852h1v109h-1zM416 852h1v54h-1zM416 906h1v55h-1zM417 951h1v10h-1zM417 906h1v45h-1zM418 942h1v19h-1zM419 942h1v9h-1zM419 951h2v10h-2zM421 942h1v19h-1zM422 915h1v46h-1zM423 788h1v173h-1zM424 834h1v127h-1zM424 788h1v46h-1zM425 951h1v10h-1zM425 834h1v117h-1zM426 924h1v37h-1zM427 924h1v27h-1zM427 951h3v10h-3zM430 915h1v46h-1zM431 897h1v64h-1zM432 942h1v19h-1zM432 897h1v45h-1zM433 951h1v10h-1zM433 942h1v9h-1zM434 942h2v19h-2zM436 924h1v37h-1zM437 870h1v91h-1zM438 951h1v10h-1zM438 870h1v81h-1zM439 915h1v46h-1zM440 915h1v36h-1zM440 951h2v10h-2zM442 942h1v19h-1zM443 906h1v55h-1zM444 951h1v10h-1zM444 906h1v45h-1zM445 436h1v525h-1zM446 942h1v19h-1zM446 436h1v506h-1zM447 924h1v37h-1zM448 915h1v46h-1zM449 942h1v19h-1zM449 915h1v27h-1zM450 707h1v254h-1zM451 942h1v19h-1zM451 707h1v235h-1zM452 942h1v9h-1zM452 951h5v10h-5zM462 951h3v10h-3zM465 915h1v46h-1zM466 942h1v19h-1zM466 915h1v27h-1zM467 942h1v9h-1zM467 951h2v10h-2zM473 951h2v10h-2zM485 933h1v28h-1zM486 933h1v18h-1zM486 951h7v10h-7zM493 779h1v182h-1zM494 779h1v172h-1zM494 951h1v10h-1zM495 942h1v19h-1zM496 942h1v9h-1zM496 951h2v10h-2zM498 942h2v19h-2zM500 942h1v9h-1zM500 951h4v10h-4zM504 942h1v19h-1zM505 942h1v9h-1zM505 951h3v10h-3zM508 888h1v73h-1zM509 888h1v54h-1zM509 942h1v19h-1zM510 942h1v9h-1zM510 951h4v10h-4zM514 942h2v19h-2zM516 942h1v9h-1zM516 951h7v10h-7zM523 924h1v37h-1zM524 915h1v46h-1zM525 915h1v36h-1zM525 951h1v10h-1zM526 942h1v19h-1zM527 933h1v28h-1zM528 843h1v118h-1zM529 725h1v236h-1zM530 725h1v226h-1zM530 951h3v10h-3zM533 933h1v28h-1zM534 933h1v9h-1zM534 942h1v19h-1zM535 942h1v9h-1zM535 951h2v10h-2zM537 843h1v118h-1zM538 843h1v108h-1zM538 951h2v10h-2zM540 888h1v73h-1zM541 888h1v63h-1zM541 951h2v10h-2zM543 897h1v64h-1zM544 942h1v19h-1zM544 897h1v45h-1zM545 942h1v9h-1zM545 951h2v10h-2zM547 933h1v28h-1zM548 951h1v10h-1zM548 933h1v18h-1zM549 942h1v19h-1zM550 942h1v9h-1zM550 951h3v10h-3zM553 924h1v37h-1zM554 870h1v91h-1zM555 951h1v10h-1zM555 870h1v81h-1zM556 906h1v55h-1zM557 906h1v45h-1zM557 951h6v10h-6zM563 870h2v91h-2zM565 942h1v19h-1zM565 870h1v72h-1zM566 942h1v9h-1zM566 951h3v10h-3zM569 942h1v19h-1zM570 942h1v9h-1zM570 951h2v10h-2zM572 942h2v19h-2zM574 942h1v9h-1zM574 951h2v10h-2zM576 915h1v46h-1zM577 915h1v36h-1zM577 951h3v10h-3zM580 915h1v46h-1zM581 915h1v36h-1zM581 951h1v10h-1zM582 933h1v28h-1zM583 933h1v18h-1zM583 951h3v10h-3zM586 942h1v19h-1zM587 942h1v9h-1zM587 951h3v10h-3zM590 906h1v55h-1zM591 797h1v164h-1zM592 797h1v154h-1zM592 951h3v10h-3zM595 942h1v19h-1zM596 951h1v10h-1zM596 942h1v9h-1zM597 924h1v37h-1zM598 942h1v19h-1zM598 924h1v18h-1zM599 951h1v10h-1zM599 942h1v9h-1zM600 942h1v19h-1zM601 942h1v9h-1zM601 951h2v10h-2zM603 942h1v19h-1zM604 915h1v46h-1zM605 861h1v100h-1zM606 861h1v90h-1zM606 951h2v10h-2zM608 906h1v55h-1zM609 951h1v10h-1zM609 906h1v45h-1zM610 933h1v28h-1zM611 951h1v10h-1zM611 933h1v18h-1zM612 942h1v19h-1zM613 942h1v9h-1zM613 951h3v10h-3zM616 906h1v55h-1zM617 942h1v19h-1zM617 906h1v36h-1zM618 951h1v10h-1zM618 942h1v9h-1zM619 879h1v82h-1zM620 879h1v72h-1zM620 951h2v10h-2zM622 942h1v19h-1zM623 942h1v9h-1zM623 951h2v10h-2zM625 924h1v37h-1zM626 924h1v27h-1zM626 951h2v10h-2zM628 924h1v37h-1zM629 951h1v10h-1zM629 924h1v27h-1zM630 942h1v19h-1zM631 951h1v10h-1zM631 942h1v9h-1zM632 752h1v209h-1zM633 752h1v190h-1zM633 942h1v19h-1zM634 906h1v55h-1zM635 942h1v19h-1zM635 906h1v36h-1zM636 933h1v28h-1zM637 906h1v55h-1zM638 906h1v45h-1zM638 951h2v10h-2zM640 942h2v19h-2zM642 942h1v9h-1zM642 951h2v10h-2zM644 942h1v19h-1zM645 816h1v145h-1zM646 816h1v135h-1zM646 951h4v10h-4zM650 924h1v37h-1zM651 924h1v9h-1zM651 933h1v28h-1zM652 933h1v18h-1zM652 951h2v10h-2zM654 942h2v19h-2zM656 942h1v9h-1zM656 951h2v10h-2zM658 942h1v19h-1zM659 942h1v9h-1zM659 951h2v10h-2zM661 852h1v109h-1zM662 852h1v99h-1zM662 951h2v10h-2zM664 942h1v19h-1zM665 942h1v9h-1zM665 951h3v10h-3zM668 942h2v19h-2zM670 942h1v9h-1zM670 951h6v10h-6zM676 924h1v37h-1zM677 951h1v10h-1zM677 924h1v27h-1zM678 933h1v28h-1zM679 870h1v91h-1zM680 870h1v72h-1zM680 942h2v19h-2zM682 788h1v173h-1zM683 951h1v10h-1zM683 788h1v163h-1zM684 942h1v19h-1zM685 951h1v10h-1zM685 942h1v9h-1zM686 897h1v64h-1zM687 942h1v19h-1zM687 897h1v45h-1zM688 924h1v37h-1zM689 924h1v18h-1zM689 942h2v19h-2zM691 933h1v28h-1zM692 933h1v9h-1zM692 942h1v19h-1zM693 951h1v10h-1zM693 942h1v9h-1zM694 942h1v19h-1zM695 906h1v55h-1zM696 906h1v27h-1zM696 933h1v28h-1zM697 933h1v9h-1zM697 942h1v19h-1zM698 942h1v9h-1zM698 951h2v10h-2zM700 942h1v19h-1zM701 951h1v10h-1zM701 942h1v9h-1zM702 888h1v73h-1zM703 951h1v10h-1zM703 888h1v63h-1zM704 924h2v37h-2zM706 942h1v19h-1zM706 924h1v18h-1zM707 870h1v91h-1zM708 870h1v81h-1zM708 951h2v10h-2zM710 933h1v28h-1zM711 888h1v73h-1zM712 888h1v54h-1zM712 942h1v19h-1zM713 915h1v46h-1zM714 897h1v64h-1zM715 897h1v54h-1zM715 951h2v10h-2zM717 942h1v19h-1zM718 942h1v9h-1zM718 951h2v10h-2zM720 879h1v82h-1zM721 915h1v46h-1zM721 879h1v36h-1zM722 915h1v36h-1zM730 942h2v19h-2zM732 933h1v28h-1zM733 951h1v10h-1zM733 933h1v18h-1zM734 933h1v28h-1zM735 951h1v10h-1zM735 933h1v18h-1zM736 924h1v37h-1zM737 924h1v9h-1zM737 933h1v28h-1zM738 933h1v18h-1zM738 951h2v10h-2zM740 942h1v19h-1zM741 942h1v9h-1zM741 951h5v10h-5zM746 933h1v28h-1zM747 951h1v10h-1zM747 933h1v18h-1zM748 933h1v28h-1zM749 861h1v100h-1zM750 951h1v10h-1zM750 861h1v90h-1zM751 942h2v19h-2zM753 951h1v10h-1zM753 942h1v9h-1zM754 942h1v19h-1zM755 951h1v10h-1zM755 942h1v9h-1zM756 933h2v28h-2zM758 933h1v18h-1zM758 951h2v10h-2zM760 834h1v127h-1zM761 834h1v117h-1zM761 951h2v10h-2zM763 924h1v37h-1zM764 924h1v27h-1zM764 951h3v10h-3zM767 906h1v55h-1zM768 906h1v45h-1zM768 951h2v10h-2zM777 951h1v10h-1zM778 942h1v19h-1zM779 951h1v10h-1zM779 942h1v9h-1zM780 942h1v19h-1zM781 942h1v9h-1zM781 951h2v10h-2zM783 942h1v19h-1zM784 806h1v155h-1zM785 806h1v145h-1zM785 951h2v10h-2zM787 924h1v37h-1zM788 924h1v9h-1zM788 933h1v28h-1zM789 951h1v10h-1zM789 933h1v18h-1zM790 879h1v82h-1zM791 879h1v72h-1zM791 951h4v10h-4zM795 906h1v55h-1zM796 906h1v45h-1zM796 951h5v10h-5zM804 951h1v10h-1zM805 933h1v28h-1zM806 933h1v18h-1zM808 951h2v10h-2zM812 951h1v10h-1zM813 942h1v19h-1zM814 933h1v28h-1zM815 933h1v18h-1zM815 951h3v10h-3zM818 942h1v19h-1zM819 951h1v10h-1zM819 942h1v9h-1zM820 942h1v19h-1zM821 924h1v37h-1zM822 924h1v27h-1zM824 951h1v10h-1zM825 933h1v28h-1zM826 933h1v9h-1zM828 942h1v19h-1zM829 933h1v28h-1zM830 933h1v18h-1zM842 933h1v28h-1zM843 951h1v10h-1zM843 933h1v18h-1zM844 942h1v19h-1zM845 951h1v10h-1zM845 942h1v9h-1zM846 933h1v28h-1zM847 888h1v73h-1zM848 888h1v54h-1zM848 942h1v19h-1zM849 942h1v9h-1zM849 951h4v10h-4zM853 942h1v19h-1zM854 951h1v10h-1zM854 942h1v9h-1zM855 924h1v37h-1zM856 951h1v10h-1zM856 924h1v27h-1zM857 915h1v46h-1zM858 915h1v9h-1zM858 924h1v37h-1zM859 924h1v27h-1zM859 951h4v10h-4zM863 942h2v19h-2zM865 942h1v9h-1zM865 951h11v10h-11zM876 861h1v100h-1zM877 861h1v90h-1zM877 951h3v10h-3zM880 942h1v19h-1zM881 933h1v28h-1zM882 933h1v18h-1zM882 951h2v10h-2zM884 924h1v37h-1zM885 825h1v136h-1zM886 825h1v126h-1zM886 951h1v10h-1zM887 752h1v209h-1zM888 752h1v199h-1zM888 951h2v10h-2zM890 788h1v173h-1zM891 788h1v163h-1zM891 951h7v10h-7zM898 870h1v91h-1zM899 888h1v73h-1zM899 870h1v18h-1zM900 888h1v27h-1zM900 915h1v46h-1zM901 942h1v19h-1zM901 915h1v27h-1zM902 915h1v46h-1zM903 915h1v36h-1zM903 951h1v10h-1zM904 942h1v19h-1zM905 933h1v28h-1zM906 933h1v18h-1zM906 951h3v10h-3zM909 933h1v28h-1zM910 933h1v18h-1zM910 951h4v10h-4zM914 924h1v37h-1zM915 924h1v27h-1zM915 951h2v10h-2zM917 942h1v19h-1zM918 879h1v82h-1zM919 879h1v72h-1zM919 951h6v10h-6zM925 942h1v19h-1zM926 951h1v10h-1zM926 942h1v9h-1zM927 942h1v19h-1zM928 951h1v10h-1zM928 942h1v9h-1zM929 942h1v19h-1zM930 933h1v28h-1zM931 933h1v18h-1zM931 951h2v10h-2zM933 897h2v64h-2zM935 897h1v54h-1zM945 897h1v64h-1zM946 897h1v36h-1zM946 933h1v28h-1zM947 951h1v10h-1zM947 933h1v18h-1zM948 942h1v19h-1zM949 942h1v9h-1zM949 951h2v10h-2zM951 942h1v19h-1zM952 888h2v73h-2zM954 888h1v27h-1zM954 915h1v46h-1zM955 942h1v19h-1zM955 915h1v27h-1zM956 942h1v9h-1zM956 951h2v10h-2zM958 933h1v28h-1zM959 924h1v37h-1zM960 924h1v27h-1zM960 951h3v10h-3zM963 906h1v55h-1zM964 906h1v45h-1zM964 951h3v10h-3zM967 924h1v37h-1zM968 942h1v19h-1zM968 924h1v18h-1zM969 915h1v46h-1zM970 915h1v36h-1zM970 951h3v10h-3zM973 942h1v19h-1zM974 915h1v46h-1zM975 915h1v36h-1zM975 951h5v10h-5zM980 924h1v37h-1zM981 924h1v27h-1zM981 951h2v10h-2zM983 942h1v19h-1zM984 942h1v9h-1zM984 951h2v10h-2zM986 897h1v64h-1zM987 897h1v54h-1zM987 951h6v10h-6zM993 942h1v19h-1zM994 942h1v9h-1zM994 951h3v10h-3zM997 942h1v19h-1zM998 942h1v9h-1zM998 951h3v10h-3zM1001 906h1v55h-1zM1002 942h1v19h-1zM1002 906h1v36h-1zM1003 951h1v10h-1zM1003 942h1v9h-1zM1004 852h1v109h-1zM1005 852h1v99h-1zM1005 951h4v10h-4zM1009 942h1v19h-1zM1010 951h1v10h-1zM1010 942h1v9h-1zM1011 942h1v19h-1zM1012 942h1v9h-1zM1012 951h3v10h-3zM1025 951h3v10h-3zM1028 861h1v100h-1zM1029 861h1v90h-1zM1029 951h4v10h-4zM1033 897h1v64h-1zM1034 897h1v54h-1zM1034 951h2v10h-2zM1036 942h1v19h-1zM1037 942h1v9h-1zM1037 951h10v10h-10zM1047 779h1v182h-1zM1048 779h1v172h-1zM1059 951h5v10h-5zM1065 834h1v127h-1zM1066 834h1v117h-1zM1067 816h1v145h-1zM1068 816h1v90h-1zM1068 906h1v55h-1zM1069 906h1v45h-1zM1080 924h1v37h-1zM1081 951h1v10h-1zM1081 924h1v27h-1zM1082 942h1v19h-1zM1083 942h1v9h-1zM1083 951h9v10h-9zM1092 752h1v209h-1zM1093 752h1v199h-1zM1093 951h4v10h-4zM1097 924h1v37h-1zM1098 924h1v27h-1zM1098 951h5v10h-5zM1103 861h1v100h-1zM1104 861h1v81h-1zM1104 942h1v19h-1zM1105 942h1v9h-1zM1105 951h5v10h-5zM1110 861h1v100h-1zM1111 861h1v90h-1zM1111 951h5v10h-5zM1116 924h1v37h-1zM1117 924h1v27h-1zM1117 951h2v10h-2zM1119 924h1v37h-1zM1120 951h1v10h-1zM1120 924h1v27h-1zM1121 942h1v19h-1zM1122 942h1v9h-1zM1122 951h2v10h-2zM1124 942h2v19h-2zM1126 942h1v9h-1zM1126 951h2v10h-2zM1128 915h1v46h-1zM1129 915h1v36h-1zM1129 951h1v10h-1zM1130 924h1v37h-1zM1131 951h1v10h-1zM1131 924h1v27h-1zM1132 897h6v64h-6zM1138 897h1v54h-1zM1138 951h5v10h-5zM1143 788h1v173h-1zM1144 788h1v154h-1zM1144 942h3v19h-3zM1147 942h1v9h-1zM1147 951h3v10h-3zM1150 924h1v37h-1zM1151 951h1v10h-1zM1151 924h1v27h-1zM1152 888h1v73h-1zM1153 888h1v63h-1zM1153 951h2v10h-2zM1155 834h1v127h-1zM1156 951h1v10h-1zM1156 834h1v117h-1zM1157 933h1v28h-1zM1158 951h1v10h-1zM1158 933h1v18h-1zM1159 788h1v173h-1zM1160 788h1v163h-1zM1160 951h2v10h-2zM1162 906h1v55h-1zM1163 906h1v45h-1zM1163 951h3v10h-3zM1166 933h1v28h-1zM1167 951h1v10h-1zM1167 933h1v18h-1zM1168 924h1v37h-1zM1169 942h1v19h-1zM1169 924h1v18h-1zM1170 942h1v9h-1zM1170 951h2v10h-2zM1172 942h1v19h-1zM1173 942h1v9h-1zM1173 951h3v10h-3zM1176 888h1v73h-1zM1177 897h1v64h-1zM1177 888h1v9h-1zM1178 942h1v19h-1zM1178 897h1v45h-1zM1179 942h1v9h-1zM1179 951h3v10h-3zM1182 942h1v19h-1zM1183 933h1v28h-1zM1184 951h1v10h-1zM1184 933h1v18h-1zM1185 879h1v82h-1zM1186 879h1v54h-1zM1186 933h1v28h-1zM1187 951h1v10h-1zM1187 933h1v18h-1zM1188 797h1v164h-1zM1189 797h1v145h-1zM1189 942h2v19h-2zM1191 942h1v9h-1zM1191 951h3v10h-3zM1194 879h1v82h-1zM1195 879h1v72h-1zM1195 951h7v10h-7zM1202 933h1v28h-1zM1203 933h1v18h-1zM1203 951h2v10h-2zM1205 942h1v19h-1zM1206 933h1v28h-1zM1207 951h1v10h-1zM1207 933h1v18h-1zM1208 788h1v173h-1zM1209 788h1v163h-1zM1209 951h4v10h-4zM1213 942h1v19h-1zM1214 942h1v9h-1zM1214 951h5v10h-5zM1219 933h1v28h-1zM1220 915h1v46h-1zM1221 915h1v36h-1zM1221 951h4v10h-4zM1225 888h1v73h-1zM1226 888h1v63h-1zM1226 951h5v10h-5zM1231 933h1v28h-1zM1232 933h1v9h-1zM1232 942h2v19h-2zM1234 951h1v10h-1zM1234 942h1v9h-1zM1235 906h1v55h-1zM1236 924h1v37h-1zM1236 906h1v18h-1zM1237 942h1v19h-1zM1237 924h1v18h-1zM1238 951h1v10h-1zM1238 942h1v9h-1zM1239 933h1v28h-1zM1240 933h1v9h-1zM1240 942h1v19h-1zM1241 942h1v9h-1zM1241 951h4v10h-4zM1245 933h1v28h-1zM1246 933h1v18h-1zM1246 951h2v10h-2zM1248 915h1v46h-1zM1249 906h1v55h-1zM1250 951h1v10h-1zM1250 906h1v45h-1zM1251 942h1v19h-1zM1252 942h1v9h-1zM1252 951h2v10h-2zM1254 942h1v19h-1zM1255 951h1v10h-1zM1255 942h1v9h-1zM1256 924h1v37h-1zM1257 951h1v10h-1zM1257 924h1v27h-1zM1268 951h4v10h-4zM1272 942h1v19h-1zM1273 942h1v9h-1zM1273 951h2v10h-2zM1285 951h1v10h-1zM1286 825h1v136h-1zM1287 825h1v126h-1zM1287 951h1v10h-1zM1288 942h2v19h-2zM1290 951h1v10h-1zM1290 942h1v9h-1zM1291 888h1v73h-1zM1292 951h1v10h-1zM1292 888h1v63h-1zM1293 924h1v37h-1zM1294 951h1v10h-1zM1294 924h1v27h-1zM1295 888h1v73h-1zM1296 888h1v63h-1zM1296 951h5v10h-5zM1301 752h1v209h-1zM1302 752h1v190h-1zM1302 942h1v19h-1zM1303 942h1v9h-1zM1303 951h2v10h-2zM1305 933h1v28h-1zM1306 788h1v173h-1zM1307 788h1v46h-1zM1307 834h2v127h-2zM1309 843h1v118h-1zM1309 834h1v9h-1zM1310 843h1v9h-1zM1310 852h2v109h-2zM1312 852h1v99h-1zM1312 951h2v10h-2zM1314 924h1v37h-1zM1315 924h1v27h-1zM1315 951h6v10h-6zM1321 879h1v82h-1zM1322 870h1v91h-1zM1323 942h1v19h-1zM1323 870h1v72h-1zM1324 933h1v28h-1zM1325 933h1v18h-1zM1325 951h4v10h-4zM1329 942h1v19h-1zM1330 942h1v9h-1zM1330 951h2v10h-2zM1332 933h1v28h-1zM1333 951h1v10h-1zM1333 933h1v18h-1zM1334 752h1v209h-1zM1335 752h1v199h-1zM1335 951h2v10h-2zM1337 942h1v19h-1zM1338 942h1v9h-1zM1338 951h4v10h-4zM1342 924h1v37h-1zM1343 924h1v27h-1zM1343 951h2v10h-2zM1345 888h1v73h-1zM1346 888h1v63h-1zM1346 951h2v10h-2zM1348 942h3v19h-3zM1351 942h1v9h-1zM1351 951h3v10h-3zM1354 897h1v64h-1zM1355 951h1v10h-1zM1355 897h1v54h-1zM1356 933h1v28h-1zM1357 906h2v55h-2zM1359 906h1v27h-1zM1359 933h1v28h-1zM1360 933h1v18h-1zM1360 951h5v10h-5zM1365 915h1v46h-1zM1366 915h1v36h-1zM1366 951h1v10h-1zM1367 942h2v19h-2zM1369 942h1v9h-1zM1369 951h3v10h-3zM1372 924h1v37h-1zM1373 924h1v27h-1zM1373 951h3v10h-3zM1376 942h1v19h-1zM1377 942h1v9h-1zM1382 942h2v19h-2zM1384 888h1v73h-1zM1385 888h1v54h-1zM1385 942h1v19h-1zM1386 933h2v28h-2zM1388 933h1v9h-1zM1388 942h1v19h-1zM1389 951h1v10h-1zM1389 942h1v9h-1zM1390 915h1v46h-1zM1391 915h1v36h-1zM1391 951h2v10h-2zM1393 788h1v173h-1zM1394 788h1v127h-1zM1394 915h1v46h-1zM1395 915h1v36h-1zM1395 951h3v10h-3zM1398 924h1v37h-1zM1399 924h1v27h-1zM1399 951h2v10h-2zM1401 942h1v19h-1zM1402 933h1v28h-1zM1403 951h1v10h-1zM1403 933h1v18h-1zM1404 924h1v37h-1zM1405 861h1v100h-1zM1406 861h1v81h-1zM1406 942h1v19h-1zM1407 942h1v9h-1zM1407 951h2v10h-2zM1409 942h1v19h-1zM1410 942h1v9h-1zM1410 951h2v10h-2zM1412 906h1v55h-1zM1413 906h1v9h-1zM1413 915h1v46h-1zM1414 915h1v36h-1zM1414 951h1v10h-1zM1415 942h1v19h-1zM1416 951h1v10h-1zM1416 942h1v9h-1zM1417 942h1v19h-1zM1418 852h2v109h-2zM1420 797h1v164h-1zM1421 951h1v10h-1zM1421 797h1v154h-1zM1422 942h1v19h-1zM1423 951h1v10h-1zM1423 942h1v9h-1zM1424 933h1v28h-1zM1425 933h1v18h-1zM1425 951h2v10h-2zM1427 924h1v37h-1zM1428 951h1v10h-1zM1428 924h1v27h-1zM1429 942h1v19h-1zM1430 942h1v9h-1zM1430 951h2v10h-2zM1432 942h1v19h-1zM1433 761h1v200h-1zM1434 761h1v172h-1zM1434 933h1v28h-1zM1435 933h1v9h-1zM1435 942h1v19h-1zM1436 942h1v9h-1zM1436 951h2v10h-2zM1438 942h1v19h-1zM1440 897h2v64h-2zM1442 897h1v36h-1zM1442 933h1v28h-1zM1443 933h1v18h-1zM1443 951h3v10h-3zM1446 942h1v19h-1zM1447 942h1v9h-1zM1447 951h3v10h-3zM1450 888h1v73h-1zM1451 888h1v63h-1zM1451 951h4v10h-4zM1455 915h1v46h-1zM1456 915h1v36h-1zM1456 951h3v10h-3zM1459 924h1v37h-1zM1460 951h1v10h-1zM1460 924h1v27h-1zM1461 942h1v19h-1zM1462 951h1v10h-1zM1462 942h1v9h-1zM1463 942h1v19h-1zM1464 942h1v9h-1zM1464 951h2v10h-2zM1466 933h1v28h-1zM1467 933h1v18h-1zM1468 951h5v10h-5zM1473 924h1v37h-1zM1474 924h1v27h-1zM1474 951h2v10h-2zM1476 716h1v245h-1zM1477 951h1v10h-1zM1477 716h1v235h-1zM1478 888h1v73h-1zM1479 906h1v55h-1zM1479 888h1v18h-1zM1480 906h1v45h-1zM1480 951h5v10h-5zM1485 942h1v19h-1zM1486 942h1v9h-1zM1486 951h2v10h-2zM1488 933h1v28h-1zM1489 933h1v18h-1zM1489 951h6v10h-6zM1495 942h1v19h-1zM1496 942h1v9h-1zM1496 951h11v10h-11zM1508 951h2v10h-2zM1520 951h4v10h-4zM1524 906h1v55h-1zM1525 942h1v19h-1zM1525 906h1v36h-1zM1526 725h1v236h-1zM1527 725h1v226h-1zM1527 951h6v10h-6zM1533 942h1v19h-1zM1534 951h1v10h-1zM1534 942h1v9h-1zM1535 942h1v19h-1zM1536 788h1v173h-1zM1537 788h1v163h-1zM1537 951h6v10h-6zM1543 933h1v28h-1zM1544 951h1v10h-1zM1544 933h1v18h-1zM1545 825h1v136h-1zM1546 825h1v126h-1zM1546 951h5v10h-5zM1561 951h2v10h-2zM1563 942h2v19h-2zM1565 942h1v9h-1zM1565 951h3v10h-3zM1568 933h1v28h-1zM1569 933h1v18h-1zM1569 951h4v10h-4zM1573 870h1v91h-1zM1574 870h1v81h-1zM1574 951h5v10h-5zM1579 897h1v64h-1zM1580 897h1v54h-1zM1580 951h2v10h-2zM1582 897h1v64h-1zM1583 942h1v19h-1zM1583 897h1v45h-1zM1584 951h1v10h-1zM1584 942h1v9h-1zM1585 933h1v28h-1zM1586 951h1v10h-1zM1586 933h1v18h-1zM1587 906h1v55h-1zM1588 888h1v73h-1zM1589 951h1v10h-1zM1589 888h1v63h-1zM1590 906h1v55h-1zM1591 906h1v45h-1zM1591 951h2v10h-2zM1593 942h1v19h-1zM1594 942h1v9h-1zM1594 951h2v10h-2zM1596 942h1v19h-1zM1597 942h1v9h-1zM1597 951h2v10h-2zM1599 942h1v19h-1zM1600 825h1v136h-1zM1601 825h1v126h-1zM1601 951h11v10h-11zM1613 924h1v37h-1zM1614 924h1v9h-1zM1614 933h1v28h-1zM1615 933h1v18h-1zM1615 951h6v10h-6zM1621 825h1v136h-1zM1622 825h1v126h-1zM1622 951h11v10h-11zM1633 915h1v46h-1zM1634 915h1v36h-1zM1634 951h2v10h-2zM1636 942h1v19h-1zM1637 933h1v28h-1zM1638 888h1v73h-1zM1639 888h1v27h-1zM1639 915h1v46h-1zM1640 915h1v36h-1zM1640 951h4v10h-4zM1644 942h1v19h-1zM1645 951h1v10h-1zM1645 942h1v9h-1zM1646 942h1v19h-1zM1647 906h1v55h-1zM1648 906h1v45h-1zM1648 951h5v10h-5zM1653 906h1v55h-1zM1654 906h1v45h-1zM1654 951h3v10h-3zM1657 834h1v127h-1zM1658 951h1v10h-1zM1658 834h1v117h-1zM1659 897h1v64h-1zM1660 897h1v54h-1zM1660 951h3v10h-3zM1663 942h1v19h-1zM1664 924h1v37h-1zM1665 924h1v27h-1zM1665 951h12v10h-12zM1678 951h3v10h-3zM1681 924h1v37h-1zM1682 924h1v27h-1zM1682 951h4v10h-4zM1686 897h1v64h-1zM1687 942h1v19h-1zM1687 897h1v45h-1zM1688 942h1v9h-1zM1688 951h2v10h-2zM1690 942h1v19h-1zM1691 942h1v9h-1zM1691 951h2v10h-2zM1693 897h1v64h-1zM1694 897h1v54h-1zM1694 951h2v10h-2zM1696 942h1v19h-1zM1697 942h1v9h-1zM1698 933h1v28h-1zM1699 933h1v9h-1zM1699 942h1v19h-1zM1700 951h1v10h-1zM1700 942h1v9h-1zM1701 906h1v55h-1zM1702 951h1v10h-1zM1702 906h1v45h-1zM1703 942h1v19h-1zM1704 951h1v10h-1zM1704 942h1v9h-1zM1705 933h1v28h-1zM1706 906h1v55h-1zM1707 906h1v45h-1zM1707 951h3v10h-3zM1710 870h1v91h-1zM1711 951h1v10h-1zM1711 870h1v81h-1zM1712 942h2v19h-2zM1714 942h1v9h-1zM1714 951h3v10h-3zM1717 897h1v64h-1zM1718 897h1v54h-1zM1718 951h4v10h-4zM1722 915h2v46h-2zM1724 915h1v36h-1zM1724 951h3v10h-3zM1737 951h5v10h-5zM1742 924h1v37h-1zM1743 924h1v27h-1zM1743 951h9v10h-9zM1752 924h1v37h-1zM1753 942h1v19h-1zM1753 924h1v18h-1zM1754 906h1v55h-1zM1755 906h1v45h-1zM1755 951h2v10h-2zM1757 924h1v37h-1zM1758 924h1v27h-1zM1758 951h2v10h-2zM1760 942h1v19h-1zM1761 951h1v10h-1zM1761 942h1v9h-1zM1762 870h1v91h-1zM1763 951h1v10h-1zM1763 870h1v81h-1zM1764 942h1v19h-1zM1765 951h1v10h-1zM1765 942h1v9h-1zM1774 942h1v19h-1zM1775 942h1v9h-1zM1775 951h3v10h-3zM1778 906h1v55h-1zM1779 951h1v10h-1zM1779 906h1v45h-1zM1780 942h1v19h-1zM1792 951h1v10h-1zM1793 924h1v37h-1zM1794 942h1v19h-1zM1794 924h1v18h-1zM1795 951h1v10h-1zM1795 942h1v9h-1zM1796 933h2v28h-2zM1798 933h1v18h-1zM1798 951h2v10h-2zM1800 942h2v19h-2zM1802 933h1v28h-1zM1803 924h1v37h-1zM1804 924h1v27h-1zM1804 951h2v10h-2zM1806 924h1v37h-1zM1807 951h1v10h-1zM1807 924h1v27h-1zM1808 942h1v19h-1zM1809 933h1v28h-1zM1810 951h1v10h-1zM1810 933h1v18h-1zM1811 942h1v19h-1zM1812 942h1v9h-1zM1812 951h2v10h-2zM1814 924h1v37h-1zM1815 734h2v227h-2zM1817 689h1v272h-1zM1818 951h1v10h-1zM1818 689h1v262h-1zM1819 897h2v64h-2zM1821 897h1v45h-1zM1821 942h3v19h-3zM1824 951h1v10h-1zM1824 942h1v9h-1zM1825 924h1v37h-1zM1826 897h1v64h-1zM1827 951h1v10h-1zM1827 897h1v54h-1zM1828 915h1v46h-1zM1829 915h1v36h-1zM1829 951h1v10h-1zM1830 942h1v19h-1zM1831 942h1v9h-1zM1831 951h2v10h-2zM1833 942h1v19h-1zM1834 942h1v9h-1zM1834 951h2v10h-2zM1836 942h1v19h-1zM1837 924h1v37h-1zM1838 915h1v46h-1zM1839 915h1v36h-1zM1839 951h1v10h-1zM1840 933h1v28h-1zM1841 183h2v778h-2z" fill="#00ff00"/><path d="M11 951h1v10h-1zM12 924h4v37h-4zM16 924h1v18h-1zM16 942h2v19h-2zM18 716h1v245h-1zM19 942h1v19h-1zM19 716h1v226h-1zM20 951h1v10h-1zM20 942h1v9h-1zM66 951h2v10h-2zM68 933h1v28h-1zM69 915h1v46h-1zM70 951h1v10h-1zM70 915h1v36h-1zM71 942h2v19h-2zM73 888h1v73h-1zM74 951h1v10h-1zM74 888h1v63h-1zM75 942h1v19h-1zM76 951h1v10h-1zM76 942h1v9h-1zM80 951h4v10h-4zM84 924h3v37h-3zM87 879h1v82h-1zM88 879h1v54h-1zM88 933h2v28h-2zM90 951h1v10h-1zM90 933h1v18h-1zM147 951h1v10h-1zM155 942h1v19h-1zM156 942h1v9h-1zM156 951h9v10h-9zM313 951h1v10h-1zM314 942h1v19h-1zM315 942h1v9h-1zM315 951h5v10h-5zM371 843h1v118h-1zM372 843h1v108h-1zM457 942h1v19h-1zM458 942h1v9h-1zM458 951h4v10h-4zM469 951h2v10h-2zM471 933h1v28h-1zM472 951h1v10h-1zM472 933h1v18h-1zM475 951h2v10h-2zM477 942h1v19h-1zM478 942h1v9h-1zM478 951h4v10h-4zM482 942h1v19h-1zM483 951h1v10h-1zM483 942h1v9h-1zM484 924h1v37h-1zM485 924h1v9h-1zM722 951h2v10h-2zM724 942h2v19h-2zM726 951h1v10h-1zM726 942h1v9h-1zM727 870h1v91h-1zM728 942h1v19h-1zM728 870h1v72h-1zM729 951h1v10h-1zM729 942h1v9h-1zM770 951h2v10h-2zM772 942h1v19h-1zM773 897h1v64h-1zM774 897h1v54h-1zM774 951h3v10h-3zM801 942h1v19h-1zM802 942h1v9h-1zM802 951h2v10h-2zM806 951h1v10h-1zM807 915h1v46h-1zM808 915h1v36h-1zM810 951h2v10h-2zM822 951h1v10h-1zM823 942h1v19h-1zM824 942h1v9h-1zM826 942h1v19h-1zM827 951h1v10h-1zM827 942h1v9h-1zM830 951h11v10h-11zM841 870h1v91h-1zM842 870h1v63h-1zM935 951h1v10h-1zM936 942h2v19h-2zM938 924h2v37h-2zM940 942h1v19h-1zM940 924h1v18h-1zM941 951h1v10h-1zM941 942h1v9h-1zM942 942h1v19h-1zM943 806h1v155h-1zM944 951h1v10h-1zM944 806h1v145h-1zM1015 942h2v19h-2zM1017 933h2v28h-2zM1019 951h1v10h-1zM1019 933h1v18h-1zM1020 870h1v91h-1zM1021 870h1v81h-1zM1021 951h3v10h-3zM1024 942h1v19h-1zM1025 942h1v9h-1zM1048 951h1v10h-1zM1049 906h1v55h-1zM1050 906h1v45h-1zM1050 951h2v10h-2zM1052 942h2v19h-2zM1054 942h1v9h-1zM1054 951h3v10h-3zM1057 897h1v64h-1zM1058 951h1v10h-1zM1058 897h1v54h-1zM1064 951h1v10h-1zM1066 951h1v10h-1zM1069 951h4v10h-4zM1073 942h2v19h-2zM1075 951h1v10h-1zM1075 942h1v9h-1zM1076 933h1v28h-1zM1077 951h1v10h-1zM1077 933h1v18h-1zM1078 942h1v19h-1zM1079 951h1v10h-1zM1079 942h1v9h-1zM1258 951h4v10h-4zM1262 942h1v19h-1zM1263 915h1v46h-1zM1264 933h1v28h-1zM1264 915h1v18h-1zM1265 951h1v10h-1zM1265 933h1v18h-1zM1266 879h1v82h-1zM1267 951h1v10h-1zM1267 879h1v72h-1zM1275 951h1v10h-1zM1276 924h1v37h-1zM1277 924h1v9h-1zM1277 933h4v28h-4zM1281 933h1v18h-1zM1281 951h4v10h-4zM1377 951h5v10h-5zM1439 942h1v19h-1zM1467 951h1v10h-1zM1507 951h1v10h-1zM1510 951h1v10h-1zM1511 933h2v28h-2zM1513 924h1v37h-1zM1514 933h1v28h-1zM1514 924h1v9h-1zM1515 924h1v37h-1zM1516 933h1v28h-1zM1516 924h1v9h-1zM1517 924h1v37h-1zM1518 933h1v28h-1zM1518 924h1v9h-1zM1519 933h1v9h-1zM1519 942h1v19h-1zM1520 942h1v9h-1zM1551 951h2v10h-2zM1553 861h1v100h-1zM1554 861h1v81h-1zM1554 942h1v19h-1zM1555 924h1v37h-1zM1556 924h1v27h-1zM1556 951h1v10h-1zM1557 942h1v19h-1zM1558 942h1v9h-1zM1558 951h3v10h-3zM1612 951h1v10h-1zM1677 951h1v10h-1zM1697 951h1v10h-1zM1727 942h1v19h-1zM1728 942h1v9h-1zM1728 951h2v10h-2zM1730 942h1v19h-1zM1731 951h1v10h-1zM1731 942h1v9h-1zM1732 942h1v19h-1zM1733 942h1v9h-1zM1733 951h4v10h-4zM1766 951h1v10h-1zM1767 906h1v55h-1zM1768 906h1v45h-1zM1768 951h2v10h-2zM1770 942h1v19h-1zM1771 942h1v9h-1zM1771 951h3v10h-3zM1781 942h3v19h-3zM1784 951h1v10h-1zM1784 942h1v9h-1zM1785 942h1v19h-1zM1786 951h1v10h-1zM1786 942h1v9h-1zM1787 915h1v46h-1zM1788 915h1v36h-1zM1788 951h2v10h-2zM1790 942h1v19h-1zM1791 951h1v10h-1zM1791 942h1v9h-1z" fill="#ff0000"/><path d="M1841 183h2v1h-2z" fill="#000"/></svg>
<span id="t53" style="top:915.23px;font-size:15.5px;line-height:20px;color:#fff;left:1851px;">4</span>
<span id="t54" style="top:879.08px;font-size:15.5px;line-height:20px;color:#fff;left:1851px;">8</span>
<span id="t55" style="top:842.93px;font-size:15.5px;line-height:20px;color:#fff;left:1851px;">12</span>
<span id="t56" style="top:806.78px;font-size:15.5px;line-height:20px;color:#fff;left:1851px;">16</span>
<span id="t57" style="top:770.63px;font-size:15.5px;line-height:20px;color:#fff;left:1851px;">20</span>
<span id="t58" style="top:734.48px;font-size:15.5px;line-height:20px;color:#fff;left:1851px;">24</span>
<span id="t59" style="top:698.33px;font-size:15.5px;line-height:20px;color:#fff;left:1851px;">28</span>
<span id="t60" style="top:662.18px;font-size:15.5px;line-height:20px;color:#fff;left:1851px;">32</span>
<span id="t61" style="top:626.03px;font-size:15.5px;line-height:20px;color:#fff;left:1851px;">36</span>
<span id="t62" style="top:589.88px;font-size:15.5px;line-height:20px;color:#fff;left:1851px;">40</span>
<span id="t63" style="top:553.73px;font-size:15.5px;line-height:20px;color:#fff;left:1851px;">44</span>
<span id="t64" style="top:517.58px;font-size:15.5px;line-height:20px;color:#fff;left:1851px;">48</span>
<span id="t65" style="top:481.43px;font-size:15.5px;line-height:20px;color:#fff;left:1851px;">52</span>
<span id="t66" style="top:445.28px;font-size:15.5px;line-height:20px;color:#fff;left:1851px;">56</span>
<span id="t67" style="top:409.13px;font-size:15.5px;line-height:20px;color:#fff;left:1851px;">60</span>
<span id="t68" style="top:372.98px;font-size:15.5px;line-height:20px;color:#fff;left:1851px;">64</span>
<span id="t69" style="top:336.83px;font-size:15.5px;line-height:20px;color:#fff;left:1851px;">68</span>
<span id="t70" style="top:300.68px;font-size:15.5px;line-height:20px;color:#fff;left:1851px;">72</span>
<span id="t71" style="top:264.53px;font-size:15.5px;line-height:20px;color:#fff;left:1851px;">76</span>
<span id="t72" style="top:228.38px;font-size:15.5px;line-height:20px;color:#fff;left:1851px;">80</span>
<span id="t73" style="top:192.23px;font-size:15.5px;line-height:20px;color:#fff;left:1851px;">84</span>
<span id="t74" style="top:123.43px;font-size:15.5px;line-height:20px;color:#fff;letter-spacing:0.210px;left:1851px;">2862.00</span>
<div style="left:1850px;top:141px;width:60px;height:19px;background:#fdf5e6"></div>
<span id="t75" style="top:140.63px;font-size:15.5px;line-height:20px;color:#000;letter-spacing:0.210px;left:1851px;">2861.00</span>
<div style="left:3px;top:966px;width:42px;height:20px;background:#fdf5e6"></div>
<span id="t76" style="top:966.33px;font-size:15.5px;line-height:20px;color:#000;letter-spacing:-0.135px;left:0px;clip-path:inset(0 0 0 3px);">8-1-26</span>
<span id="t77" style="top:966.33px;font-size:15.5px;line-height:20px;color:#fff;letter-spacing:0.227px;left:56.6px;">11:02:07</span>
<span id="t78" style="top:966.33px;font-size:15.5px;line-height:20px;color:#fff;letter-spacing:0.227px;left:130.6px;">11:02:23</span>
<span id="t79" style="top:966.33px;font-size:15.5px;line-height:20px;color:#fff;letter-spacing:0.227px;left:204.6px;">11:02:31</span>
<span id="t80" style="top:966.33px;font-size:15.5px;line-height:20px;color:#fff;letter-spacing:0.227px;left:278.6px;">11:02:46</span>
<span id="t81" style="top:966.33px;font-size:15.5px;line-height:20px;color:#fff;letter-spacing:0.227px;left:352.6px;">11:03:06</span>
<span id="t82" style="top:966.33px;font-size:15.5px;line-height:20px;color:#fff;letter-spacing:0.227px;left:426.6px;">11:03:09</span>
<span id="t83" style="top:966.33px;font-size:15.5px;line-height:20px;color:#fff;letter-spacing:0.227px;left:500.6px;">11:03:20</span>
<span id="t84" style="top:966.33px;font-size:15.5px;line-height:20px;color:#fff;letter-spacing:0.227px;left:574.6px;">11:03:27</span>
<span id="t85" style="top:966.33px;font-size:15.5px;line-height:20px;color:#fff;letter-spacing:0.227px;left:648.6px;">11:03:50</span>
<span id="t86" style="top:966.33px;font-size:15.5px;line-height:20px;color:#fff;letter-spacing:0.227px;left:722.6px;">11:04:08</span>
<span id="t87" style="top:966.33px;font-size:15.5px;line-height:20px;color:#fff;letter-spacing:0.227px;left:796.6px;">11:04:52</span>
<span id="t88" style="top:966.33px;font-size:15.5px;line-height:20px;color:#fff;letter-spacing:0.227px;left:870.6px;">11:05:10</span>
<span id="t89" style="top:966.33px;font-size:15.5px;line-height:20px;color:#fff;letter-spacing:0.227px;left:944.6px;">11:05:23</span>
<span id="t90" style="top:966.33px;font-size:15.5px;line-height:20px;color:#fff;letter-spacing:0.227px;left:1018.6px;">11:05:31</span>
<span id="t91" style="top:966.33px;font-size:15.5px;line-height:20px;color:#fff;letter-spacing:0.227px;left:1092.6px;">11:06:04</span>
<span id="t92" style="top:966.33px;font-size:15.5px;line-height:20px;color:#fff;letter-spacing:0.227px;left:1166.6px;">11:06:04</span>
<span id="t93" style="top:966.33px;font-size:15.5px;line-height:20px;color:#fff;letter-spacing:0.227px;left:1240.6px;">11:06:05</span>
<span id="t94" style="top:966.33px;font-size:15.5px;line-height:20px;color:#fff;letter-spacing:0.227px;left:1314.6px;">11:06:06</span>
<span id="t95" style="top:966.33px;font-size:15.5px;line-height:20px;color:#fff;letter-spacing:0.227px;left:1388.6px;">11:06:13</span>
<span id="t96" style="top:966.33px;font-size:15.5px;line-height:20px;color:#fff;letter-spacing:0.227px;left:1462.6px;">11:06:24</span>
<span id="t97" style="top:966.33px;font-size:15.5px;line-height:20px;color:#fff;letter-spacing:0.227px;left:1536.6px;">11:06:58</span>
<span id="t98" style="top:966.33px;font-size:15.5px;line-height:20px;color:#fff;letter-spacing:0.227px;left:1610.6px;">11:07:02</span>
<span id="t99" style="top:966.33px;font-size:15.5px;line-height:20px;color:#fff;letter-spacing:0.227px;left:1684.6px;">11:07:08</span>
<span id="t100" style="top:966.33px;font-size:15.5px;line-height:20px;color:#fff;letter-spacing:0.227px;left:1758.6px;">11:07:28</span>
<div style="left:1887px;top:966px;width:30px;height:20px;background:#ff0000"></div>
<span id="t101" style="top:966.33px;font-size:15.5px;line-height:20px;color:#fff;letter-spacing:-0.589px;left:1892px;">0 E</span>
<div style="left:3px;top:103px;width:1906px;height:74px;border:3px solid #ff0000;box-sizing:border-box"></div>
<svg style="left:2px;top:987px" width="1916" height="22" viewBox="0 0 1916 22"><path d="M10.500 5.200l-4.200 3.300 4.200 3.300" fill="none" stroke="#555" stroke-width="1.900"/><path d="M1905.500 5.200l4.200 3.300-4.200 3.300" fill="none" stroke="#555" stroke-width="1.900"/><rect x="1833" y="1" width="17" height="15" fill="#cdcdcd"/></svg>
<div style="left:2px;top:1009px;width:1916px;height:1px;background:#696969"></div>
<div style="left:2px;top:1010px;width:1916px;height:1px;background:#a0a0a0"></div>
<div style="left:2px;top:1011px;width:1916px;height:28px;background:#f0f0f0"></div>
<div style="left:2px;top:1038px;width:1916px;height:1px;background:#fff"></div>
<div style="left:6px;top:1012px;width:174px;height:24px;background:#f0f0f0;border:1px solid;border-color:#fff #696969 #696969 #fff;box-shadow:inset -1px 0 0 #a0a0a0;box-sizing:border-box"></div>
<span id="t102" style="top:1014.13px;font-size:15.5px;line-height:20px;color:#000;letter-spacing:-0.018px;left:10.4px;">GCG8  1830 Trades  #8</span>
<div style="left:181px;top:1009px;width:149px;height:29px;background:#0078d7;border:1px solid;border-color:#0078d7 #696969 #696969 #0078d7;box-shadow:inset -1px -1px 0 #a0a0a0;box-sizing:border-box"></div>
<span id="t103" style="top:1014.13px;font-size:15.5px;line-height:20px;color:#fff;letter-spacing:-0.071px;left:187px;">ESH8  1 Trades  #1</span>
<div style="left:330px;top:1012px;width:363px;height:24px;background:#f0f0f0;border:1px solid;border-color:#fff #696969 #696969 #fff;box-shadow:inset -1px 0 0 #a0a0a0;box-sizing:border-box"></div>
<span id="t104" style="top:1014.13px;font-size:15.5px;line-height:20px;color:#000;letter-spacing:0.111px;left:334px;">Volume_Divided_By_Number_Of_Trades.385.scss</span>
<div style="left:561px;top:288px;width:798px;height:463px;background:#f0f0f0;border:1px solid #1a7ad4;box-sizing:border-box;box-shadow:inset 0 0 0 1px #fbf7f0"></div>
<div style="left:561px;top:288px;width:798px;height:26px;background:#0063b1;border:1px solid #1a7ad4;border-bottom:0;box-sizing:border-box"></div>
<span id="t105" style="top:291.80px;font-size:13px;line-height:17px;color:#fff;word-spacing:-1px;letter-spacing:0.156px;left:565.3px;">Chart Studies for: ESH8  1 Trades  #1</span>
<div style="left:1289px;top:289px;width:33px;height:18px;background:#f0f0f0;border:1px solid;border-color:#fff #696969 #696969 #fff;box-shadow:inset -1px -1px 0 #a0a0a0;box-sizing:border-box"><svg width="31" height="16" viewBox="0 0 31 16"><path d="M10.500 2.500h10v3.500M20.500 10.500v2h-10v-10" fill="none" stroke="#000" stroke-width="1.200"/><path d="M10 2h11v2.600h-11z" fill="#000"/><path d="M15 8.500h5" stroke="#000" stroke-width="1.400"/><path d="M19 5.800l3.200 2.700-3.200 2.700z" fill="#000"/></svg></div>
<svg style="left:1336px;top:294px" width="14" height="14" viewBox="0 0 14 14"><path d="M2 2l10 10M12 2L2 12" stroke="#fff" stroke-width="1.300"/></svg>
<span id="t106" style="top:323.15px;font-size:14px;line-height:18px;color:#000;word-spacing:-1px;letter-spacing:-0.104px;left:576.3px;">Studies Available:</span>
<div style="left:576px;top:346px;width:288px;height:279px;background:#fff;border:1px solid;border-color:#a0a0a0 #fff #fff #a0a0a0;box-shadow:inset 1px 1px 0 #696969;box-sizing:border-box;overflow:hidden"></div>
<div style="left:578px;top:460px;width:267px;height:16px;background:#0078d7"></div>
<span id="t107" style="top:347.05px;font-size:14px;line-height:18px;color:#000;word-spacing:-1px;letter-spacing:0.029px;left:580px;">UpTick Volume</span>
<span id="t108" style="top:363.05px;font-size:14px;line-height:18px;color:#000;word-spacing:-1px;letter-spacing:-0.219px;left:580px;">Value Chart</span>
<span id="t109" style="top:379.05px;font-size:14px;line-height:18px;color:#000;word-spacing:-1px;letter-spacing:-0.208px;left:580px;">Value Chart Levels</span>
<span id="t110" style="top:395.05px;font-size:14px;line-height:18px;color:#000;word-spacing:-1px;letter-spacing:-0.224px;left:580px;">Vertical Horizontal Filter</span>
<span id="t111" style="top:411.05px;font-size:14px;line-height:18px;color:#000;word-spacing:-1px;letter-spacing:-0.212px;left:580px;">Volatility - Chaikin's</span>
<span id="t112" style="top:427.05px;font-size:14px;line-height:18px;color:#000;word-spacing:-1px;letter-spacing:-0.147px;left:580px;">Volatility - Historical</span>
<span id="t113" style="top:443.05px;font-size:14px;line-height:18px;color:#000;word-spacing:-1px;letter-spacing:-0.140px;left:580px;">Volatility Trend Indicator</span>
<span id="t114" style="top:459.05px;font-size:14px;line-height:18px;color:#fff;word-spacing:-1px;letter-spacing:-0.201px;left:580px;">Volume</span>
<span id="t115" style="top:475.05px;font-size:14px;line-height:18px;color:#000;word-spacing:-1px;letter-spacing:-0.198px;left:580px;">Volume - Bitcoin</span>
<span id="t116" style="top:491.05px;font-size:14px;line-height:18px;color:#000;word-spacing:-1px;letter-spacing:-0.082px;left:580px;">Volume / NumberTrades</span>
<span id="t117" style="top:507.05px;font-size:14px;line-height:18px;color:#000;word-spacing:-1px;letter-spacing:-0.085px;left:580px;">Volume At Price Threshold Alert</span>
<span id="t118" style="top:523.05px;font-size:14px;line-height:18px;color:#000;word-spacing:-1px;letter-spacing:-0.136px;left:580px;">Volume At Price Threshold Alert V2</span>
<span id="t119" style="top:539.05px;font-size:14px;line-height:18px;color:#000;word-spacing:-1px;letter-spacing:-0.095px;left:580px;">Volume Bar Range Ratio</span>
<span id="t120" style="top:555.05px;font-size:14px;line-height:18px;color:#000;word-spacing:-1px;letter-spacing:-0.115px;left:580px;">Volume By Price</span>
<span id="t121" style="top:571.05px;font-size:14px;line-height:18px;color:#000;word-spacing:-1px;letter-spacing:-0.251px;left:580px;">Volume Distribution Paint Bar Study</span>
<span id="t122" style="top:587.05px;font-size:14px;line-height:18px;color:#000;word-spacing:-1px;letter-spacing:-0.061px;left:580px;">Volume Value Area Lines</span>
<span id="t123" style="top:603.05px;font-size:14px;line-height:18px;color:#000;word-spacing:-1px;letter-spacing:-0.044px;left:580px;">Volume Weighted Average Price</span>
<span id="t124" style="top:619.05px;font-size:14px;line-height:18px;color:#000;word-spacing:-1px;letter-spacing:-0.013px;left:580px;clip-path:inset(0 0 13.05px 0);">Volume Weighted Average Price - Rolling</span>
<div style="left:846px;top:349px;width:16px;height:274px;background:#f0f0f0"></div>
<svg style="left:846px;top:349px" width="16" height="274" viewBox="0 0 16 274"><path d="M4.500 10l3.500-3.500 3.500 3.500" fill="none" stroke="#444" stroke-width="1.500"/><path d="M4.500 264l3.500 3.500 3.500-3.500" fill="none" stroke="#444" stroke-width="1.500"/><rect x="1" y="229" width="14" height="17" fill="#cdcdcd"/></svg>
<div style="left:870px;top:348px;width:72px;height:28px;background:#f0f0f0;border:1px solid;border-color:#fff #696969 #696969 #fff;box-shadow:inset -1px -1px 0 #a0a0a0;box-sizing:border-box"></div>
<span style="top:352.25px;font-size:14px;line-height:18px;color:#000;word-spacing:-1px;letter-spacing:-0.359px;left:705.5px;width:400px;text-align:center;"><i id="t125">Add &gt;&gt;</i></span>
<div style="left:870px;top:397px;width:13px;height:13px;background:#fff;border:1px solid;border-color:#a0a0a0 #fff #fff #a0a0a0;box-shadow:inset 1px 1px 0 #696969;box-sizing:border-box"></div>
<span id="t126" style="top:386.15px;font-size:14px;line-height:18px;color:#000;word-spacing:-1px;letter-spacing:-0.383px;left:888px;">Show</span>
<span id="t127" style="top:402.15px;font-size:14px;line-height:18px;color:#000;word-spacing:-1px;letter-spacing:-0.387px;left:888px;">Settings</span>
<span id="t128" style="top:324.75px;font-size:14px;line-height:18px;color:#000;word-spacing:-1px;letter-spacing:-0.291px;left:946.2px;">Studies to Graph:</span>
<div style="left:946px;top:348px;width:277px;height:277px;background:#fff;border:1px solid;border-color:#a0a0a0 #fff #fff #a0a0a0;box-shadow:inset 1px 1px 0 #696969;box-sizing:border-box"></div>
<div style="left:948px;top:350px;width:274px;height:16px;background:#0078d7"></div>
<span id="t129" style="top:349.05px;font-size:14px;line-height:18px;color:#fff;word-spacing:-1px;letter-spacing:-0.325px;left:951px;">1 | ID:1  Volume | 65 ms | CalcOrder: 1</span>
<div style="left:1236px;top:348px;width:108px;height:28px;background:#f0f0f0;border:1px solid;border-color:#fff #696969 #696969 #fff;box-shadow:inset -1px -1px 0 #a0a0a0;box-sizing:border-box"></div>
<span style="top:352.25px;font-size:14px;line-height:18px;color:#000;word-spacing:-1px;letter-spacing:-0.147px;left:1089.5px;width:400px;text-align:center;"><i id="t130">Move Up</i></span>
<div style="left:1236px;top:388px;width:108px;height:28px;background:#f0f0f0;border:1px solid;border-color:#fff #696969 #696969 #fff;box-shadow:inset -1px -1px 0 #a0a0a0;box-sizing:border-box"></div>
<span style="top:392.25px;font-size:14px;line-height:18px;color:#000;word-spacing:-1px;letter-spacing:-0.325px;left:1089.5px;width:400px;text-align:center;"><i id="t131">Move Down</i></span>
<div style="left:1236px;top:444px;width:108px;height:28px;background:#f0f0f0;border:1px solid;border-color:#fff #696969 #696969 #fff;box-shadow:inset -1px -1px 0 #a0a0a0;box-sizing:border-box"></div>
<span style="top:448.25px;font-size:14px;line-height:18px;color:#000;word-spacing:-1px;letter-spacing:-0.487px;left:1089.5px;width:400px;text-align:center;"><i id="t132">Settings</i></span>
<div style="left:1260px;top:495px;width:13px;height:13px;background:#fff;border:1px solid;border-color:#a0a0a0 #fff #fff #a0a0a0;box-shadow:inset 1px 1px 0 #696969;box-sizing:border-box"></div>
<span id="t133" style="top:492.65px;font-size:14px;line-height:18px;color:#000;word-spacing:-1px;letter-spacing:-0.074px;left:1278px;">Hide</span>
<div style="left:1236px;top:532px;width:108px;height:28px;background:#f0f0f0;border:1px solid;border-color:#fff #696969 #696969 #fff;box-shadow:inset -1px -1px 0 #a0a0a0;box-sizing:border-box"></div>
<span style="top:536.25px;font-size:14px;line-height:18px;color:#000;word-spacing:-1px;letter-spacing:-0.231px;left:1089.5px;width:400px;text-align:center;"><i id="t134">Duplicate</i></span>
<div style="left:1236px;top:580px;width:108px;height:28px;background:#f0f0f0;border:1px solid;border-color:#fff #696969 #696969 #fff;box-shadow:inset -1px -1px 0 #a0a0a0;box-sizing:border-box"></div>
<span style="top:584.25px;font-size:14px;line-height:18px;color:#000;word-spacing:-1px;letter-spacing:-0.223px;left:1089.5px;width:400px;text-align:center;"><i id="t135">Remove</i></span>
<div style="left:576px;top:632px;width:288px;height:28px;background:#f0f0f0;border:1px solid;border-color:#fff #696969 #696969 #fff;box-shadow:inset -1px -1px 0 #a0a0a0;box-sizing:border-box"></div>
<span style="top:636.25px;font-size:14px;line-height:18px;color:#000;word-spacing:-1px;letter-spacing:-0.265px;left:519.5px;width:400px;text-align:center;"><i id="t136">Show Study Description</i></span>
<div style="left:576px;top:670px;width:140px;height:28px;background:#f0f0f0;border:1px solid;border-color:#fff #696969 #696969 #fff;box-shadow:inset -1px -1px 0 #a0a0a0;box-sizing:border-box"></div>
<span style="top:674.25px;font-size:14px;line-height:18px;color:#000;word-spacing:-1px;letter-spacing:-0.315px;left:445.5px;width:400px;text-align:center;"><i id="t137">Add Custom Study</i></span>
<div style="left:724px;top:670px;width:140px;height:28px;background:#f0f0f0;border:1px solid;border-color:#fff #696969 #696969 #fff;box-shadow:inset -1px -1px 0 #a0a0a0;box-sizing:border-box"></div>
<span style="top:674.25px;font-size:14px;line-height:18px;color:#000;word-spacing:-1px;letter-spacing:-0.289px;left:593.5px;width:400px;text-align:center;"><i id="t138">Custom Study Help</i></span>
<div style="left:576px;top:708px;width:92px;height:28px;background:#f0f0f0;border:1px solid #000;box-sizing:border-box"></div>
<div style="left:577px;top:709px;width:90px;height:26px;border:1px solid;border-color:#fff #696969 #696969 #fff;box-shadow:inset -1px -1px 0 #a0a0a0;box-sizing:border-box"></div>
<span style="top:712.25px;font-size:14px;line-height:18px;color:#000;word-spacing:-1px;letter-spacing:-1.367px;left:421.5px;width:400px;text-align:center;"><i id="t139">OK</i></span>
<div style="left:672px;top:708px;width:92px;height:28px;background:#f0f0f0;border:1px solid;border-color:#fff #696969 #696969 #fff;box-shadow:inset -1px -1px 0 #a0a0a0;box-sizing:border-box"></div>
<span style="top:712.25px;font-size:14px;line-height:18px;color:#000;word-spacing:-1px;letter-spacing:-0.282px;left:517.5px;width:400px;text-align:center;"><i id="t140">Cancel</i></span>
<div style="left:768px;top:708px;width:92px;height:28px;background:#f0f0f0;border:1px solid;border-color:#fff #696969 #696969 #fff;box-shadow:inset -1px -1px 0 #a0a0a0;box-sizing:border-box"></div>
<span style="top:712.25px;font-size:14px;line-height:18px;color:#000;word-spacing:-1px;letter-spacing:-0.166px;left:613.5px;width:400px;text-align:center;"><i id="t141">Apply</i></span>
<div style="left:864px;top:708px;width:92px;height:28px;background:#f0f0f0;border:1px solid;border-color:#fff #696969 #696969 #fff;box-shadow:inset -1px -1px 0 #a0a0a0;box-sizing:border-box"></div>
<span style="top:712.25px;font-size:14px;line-height:18px;color:#000;word-spacing:-1px;letter-spacing:-0.199px;left:709.5px;width:400px;text-align:center;"><i id="t142">Help</i></span>
<div style="left:970px;top:636px;width:373px;height:100px;border:1px solid;border-color:#a0a0a0 #fff #fff #a0a0a0;box-shadow:inset -1px -1px 0 #a0a0a0, inset 1px 1px 0 #fff;box-sizing:border-box"></div>
<div style="left:976px;top:628px;width:204px;height:16px;background:#f0f0f0"></div>
<span id="t143" style="top:627.15px;font-size:14px;line-height:18px;color:#000;word-spacing:-1px;letter-spacing:-0.157px;left:979px;">Save Studies As Study Collection</span>
<span id="t144" style="top:647.05px;font-size:14px;line-height:18px;color:#000;word-spacing:-1px;letter-spacing:-0.247px;left:982px;">Name:</span>
<div style="left:980px;top:670px;width:229px;height:23px;background:#fff;border:1px solid;border-color:#a0a0a0 #fff #fff #a0a0a0;box-shadow:inset 1px 1px 0 #696969;box-sizing:border-box"></div>
<div style="left:1190px;top:672px;width:17px;height:19px;background:#f0f0f0;border:1px solid;border-color:#fff #696969 #696969 #fff;box-shadow:inset -1px -1px 0 #a0a0a0;box-sizing:border-box"><svg width="15" height="17" viewBox="0 0 15 17"><path d="M4 7h7l-3.500 3.500z" fill="#000"/></svg></div>
<div style="left:980px;top:709px;width:13px;height:13px;background:#fff;border:1px solid;border-color:#a0a0a0 #fff #fff #a0a0a0;box-shadow:inset 1px 1px 0 #696969;box-sizing:border-box"></div>
<span id="t145" style="top:706.45px;font-size:14px;line-height:18px;color:#000;word-spacing:-1px;letter-spacing:-0.234px;left:998px;">Prompt to Remove Existing Studies</span>
<div style="left:1228px;top:640px;width:112px;height:28px;background:#f0f0f0;border:1px solid;border-color:#fff #696969 #696969 #fff;box-shadow:inset -1px -1px 0 #a0a0a0;box-sizing:border-box"></div>
<span style="top:644.25px;font-size:14px;line-height:18px;color:#000;word-spacing:-1px;letter-spacing:-0.129px;left:1083.5px;width:400px;text-align:center;"><i id="t146">Save Single</i></span>
<div style="left:1228px;top:672px;width:112px;height:28px;background:#f0f0f0;border:1px solid;border-color:#fff #696969 #696969 #fff;box-shadow:inset -1px -1px 0 #a0a0a0;box-sizing:border-box"></div>
<span style="top:676.25px;font-size:14px;line-height:18px;color:#000;word-spacing:-1px;letter-spacing:0.001px;left:1083.5px;width:400px;text-align:center;"><i id="t147">Save All</i></span>
<div style="left:1228px;top:704px;width:112px;height:28px;background:#f0f0f0;border:1px solid;border-color:#fff #696969 #696969 #fff;box-shadow:inset -1px -1px 0 #a0a0a0;box-sizing:border-box"></div>
<span style="top:708.25px;font-size:14px;line-height:18px;color:#000;word-spacing:-1px;letter-spacing:-0.245px;left:1083.5px;width:400px;text-align:center;"><i id="t148">Delete</i></span>
<div style="left:543px;top:457px;width:124px;height:25px;border:3px solid #ff0000;box-sizing:border-box"></div>
<div style="left:540px;top:493px;width:212px;height:20px;border:3px solid #ff0000;box-sizing:border-box"></div>
</body></html>
